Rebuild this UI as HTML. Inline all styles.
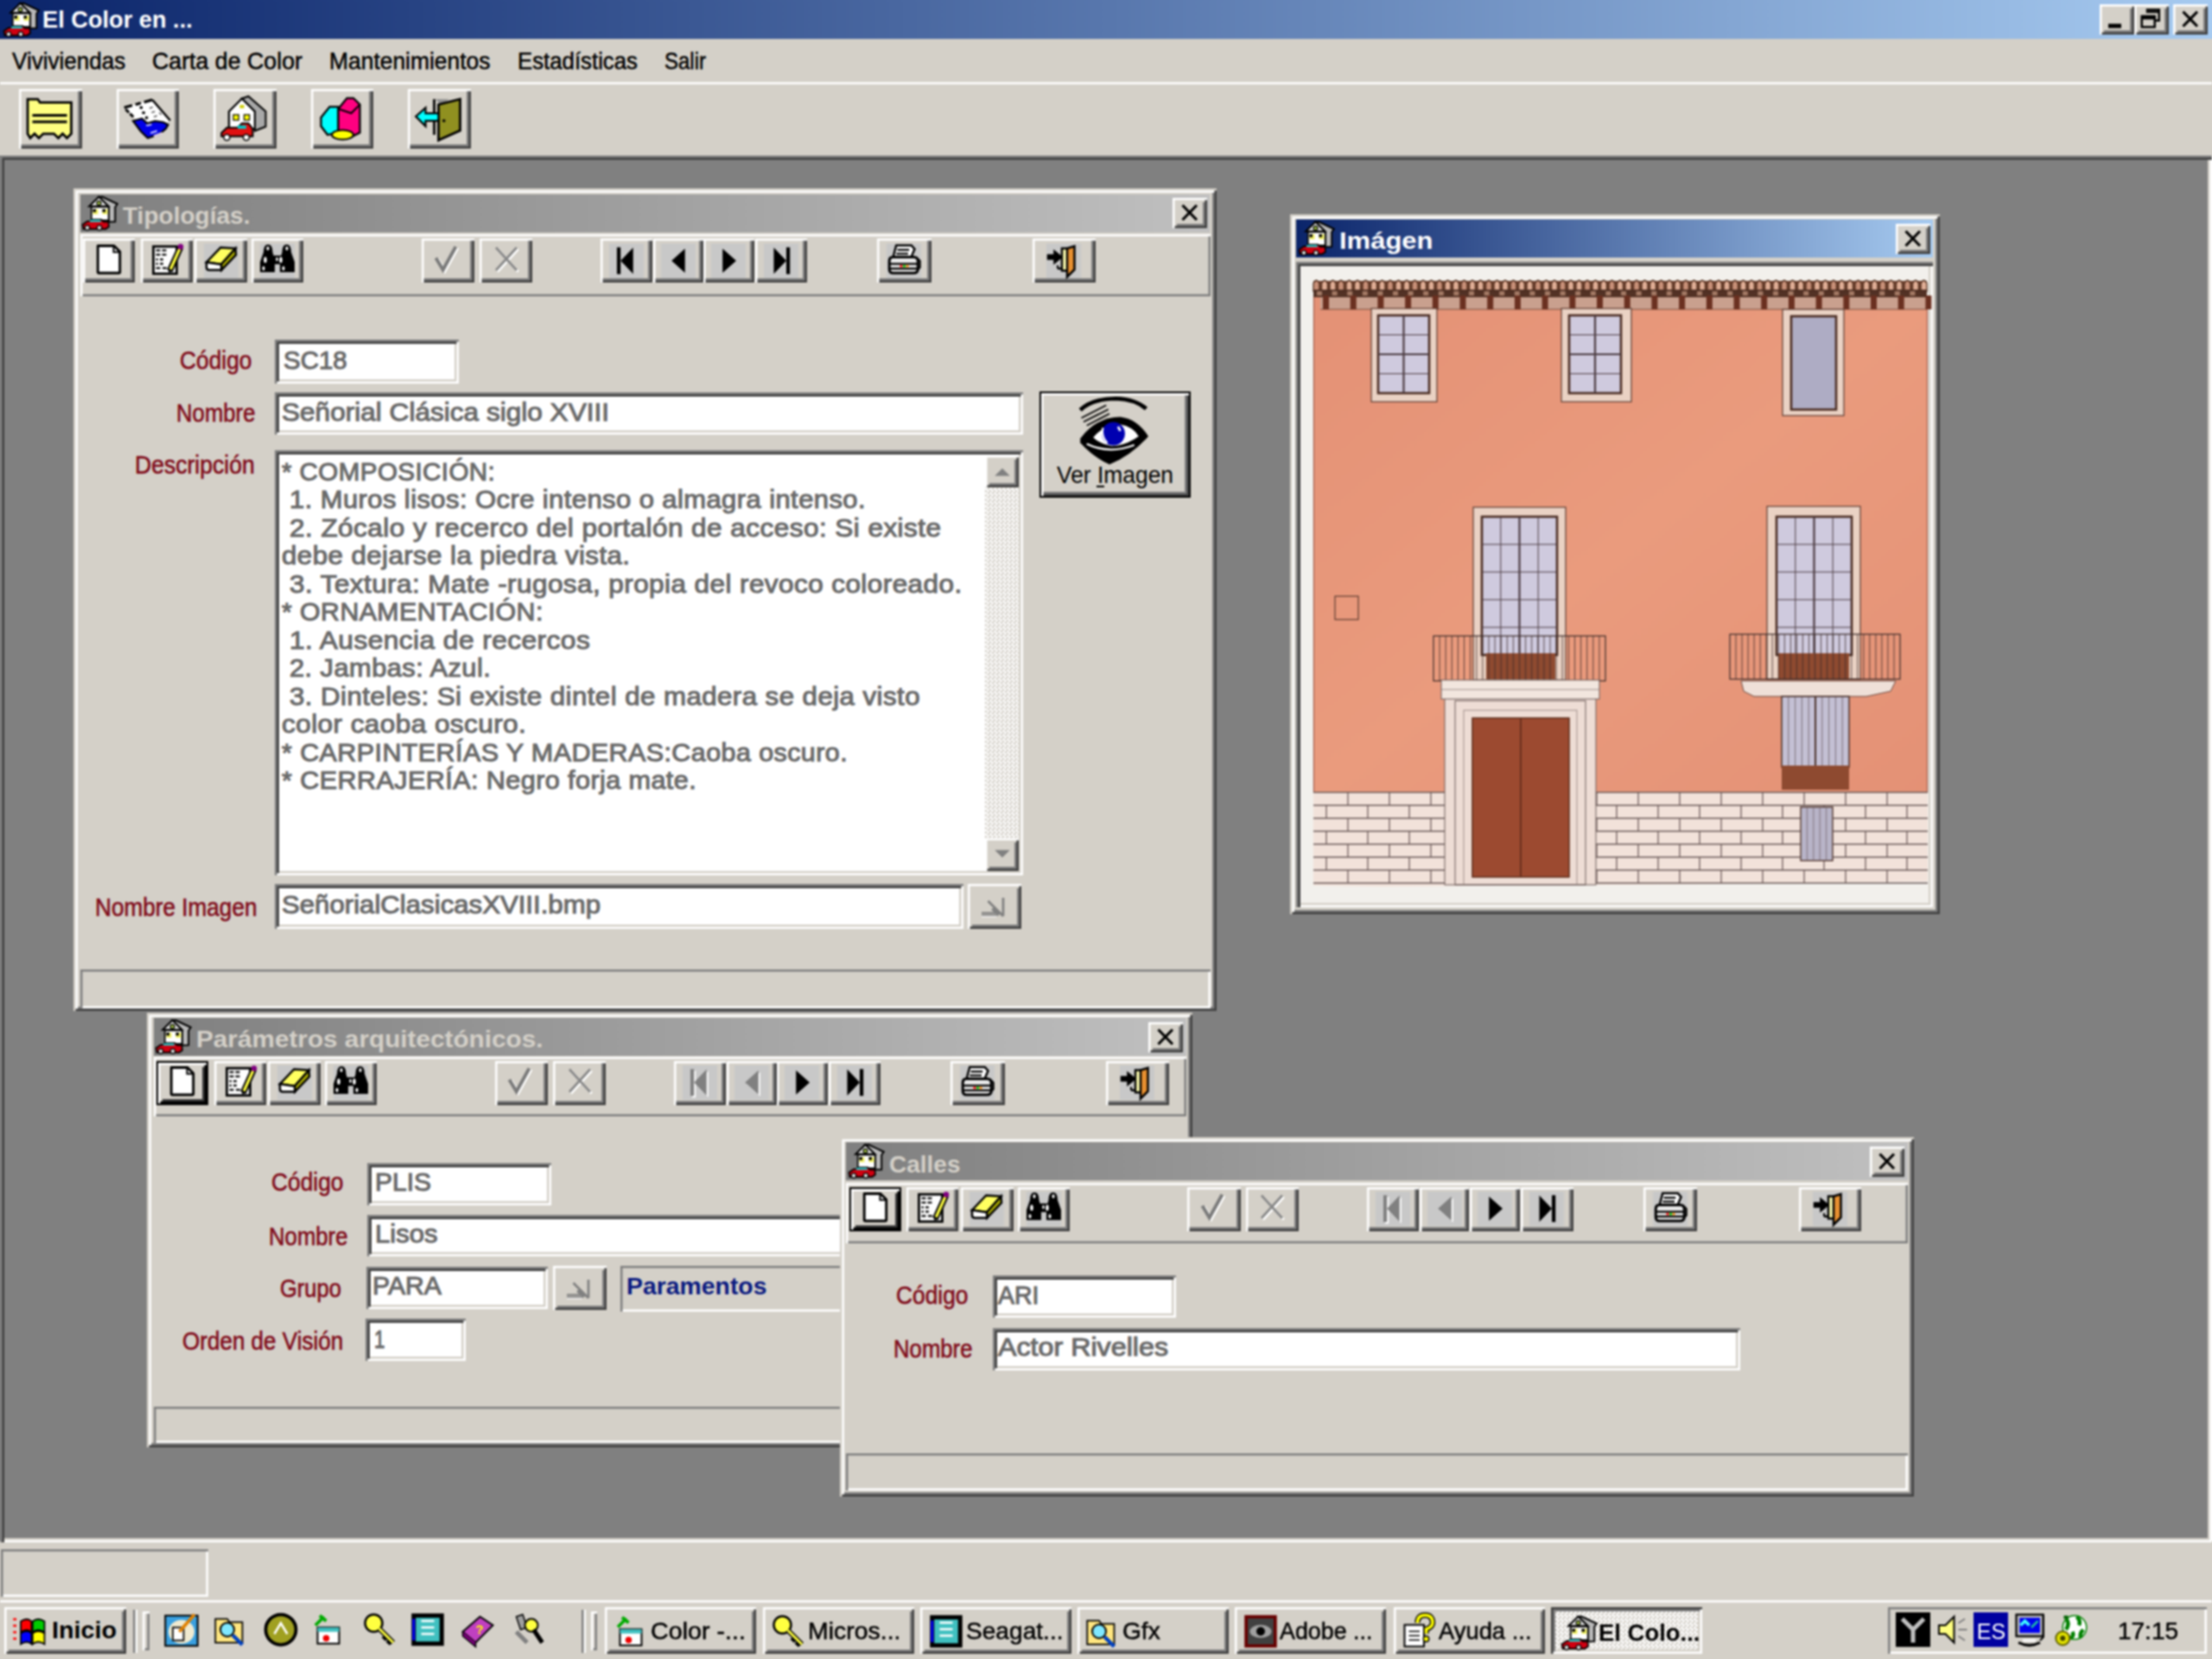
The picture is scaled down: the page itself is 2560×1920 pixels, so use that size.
<!DOCTYPE html><html><head><meta charset="utf-8"><style>

html,body{margin:0;padding:0;background:#d4d0c8;overflow:hidden}
#s{position:absolute;left:0;top:0;width:2560px;height:1920px;filter:blur(0.9px);background:#d4d0c8;font-family:"Liberation Sans",sans-serif}
#s div{position:absolute;box-sizing:border-box}
#s .t{white-space:nowrap;transform-origin:0 0}

</style></head><body><div id="s">
<div style="left:-15px;top:-15px;width:2590px;height:15px;background:linear-gradient(to right,#0a246a,#a6caf0);"></div>
<div style="left:-15px;top:-15px;width:15px;height:60px;background:#0a246a;"></div>
<div style="left:2560px;top:-15px;width:15px;height:60px;background:#a6caf0;"></div>
<div style="left:-15px;top:45px;width:15px;height:135px;background:#d4d0c8;"></div>
<div style="left:2560px;top:45px;width:15px;height:135px;background:#d4d0c8;"></div>
<div style="left:-15px;top:180px;width:15px;height:1602.5px;background:#808080;"></div>
<div style="left:2560px;top:180px;width:15px;height:1602.5px;background:#fff;"></div>
<div style="left:-15px;top:1782.5px;width:15px;height:152.5px;background:#d4d0c8;"></div>
<div style="left:2560px;top:1782.5px;width:15px;height:152.5px;background:#d4d0c8;"></div>
<div style="left:-15px;top:1920px;width:2590px;height:15px;background:#d4d0c8;"></div>
<div style="left:0px;top:0px;width:2560px;height:45px;background:linear-gradient(to right,#0a246a,#a6caf0);"></div>
<svg style="position:absolute;left:5px;top:2.5px;overflow:visible" width="40" height="40" viewBox="0 0 16 16"><path d="M8.9 0.3L15.9 3.6L14.9 5.1V11.8L11.9 11.9V5L7.4 0.4Z" fill="#b8b8b8" stroke="#000" stroke-width="0.8"/><path d="M2.9 4.7L7.4 0.3L11.8 4.7Z" fill="#e8e8e8" stroke="#000" stroke-width="0.8"/><circle cx="7.4" cy="3.2" r="1" fill="#a0c040" stroke="#000" stroke-width="0.5"/><rect x="3.9" y="5" width="8" height="6.2" fill="#fff" stroke="#000" stroke-width="0.7"/><rect x="4.6" y="6" width="2.4" height="2.4" fill="#f0f060"/><rect x="4.6" y="6" width="1.4" height="1.4" fill="#000"/><rect x="9" y="6" width="2.4" height="2.4" fill="#f0f060"/><rect x="9" y="6" width="1.4" height="1.4" fill="#000"/><path d="M-0.2 13.2L2 11.6H3.2L4 10.8H8.5L9.6 11.8H11.8L12 14.2L10.5 15.2H0.2Z" fill="#d00010" stroke="#000" stroke-width="0.7"/><path d="M3.5 11H8L8.6 12H3Z" fill="#30c8c8"/><circle cx="2" cy="14.6" r="1.1" fill="#e0e0e0" stroke="#000" stroke-width="0.5"/><circle cx="7.6" cy="14.6" r="1.1" fill="#e0e0e0" stroke="#000" stroke-width="0.5"/></svg>
<div class="t" style="left:48.8px;top:9.2px;font-size:27.5px;font-weight:bold;line-height:27.5px;color:#fff;transform:scaleX(0.9888);">El Color en ...</div>
<div style="left:2430px;top:5px;width:40px;height:35px;box-shadow:inset 2.5px 2.5px #fff,inset -2.5px -2.5px #404040,inset 5px 5px #d4d0c8,inset -5px -5px #808080;background:#d4d0c8;"></div>
<svg style="position:absolute;left:2430px;top:5px;overflow:visible" width="40" height="35" viewBox="0 0 16 14"><rect x="4" y="9" width="6" height="2" fill="#000"/></svg>
<div style="left:2470px;top:5px;width:40px;height:35px;box-shadow:inset 2.5px 2.5px #fff,inset -2.5px -2.5px #404040,inset 5px 5px #d4d0c8,inset -5px -5px #808080;background:#d4d0c8;"></div>
<svg style="position:absolute;left:2470px;top:5px;overflow:visible" width="40" height="35" viewBox="0 0 16 14"><path d="M5.5 2.5h6v5h-2" stroke="#000" fill="none"/><path d="M5.5 3.5h6" stroke="#000"/><rect x="3.5" y="5.5" width="6" height="5" stroke="#000" fill="none"/><path d="M3.5 6.5h6" stroke="#000"/></svg>
<div style="left:2515px;top:5px;width:40px;height:35px;box-shadow:inset 2.5px 2.5px #fff,inset -2.5px -2.5px #404040,inset 5px 5px #d4d0c8,inset -5px -5px #808080;background:#d4d0c8;"></div>
<svg style="position:absolute;left:2515px;top:5px;overflow:visible" width="40" height="35" viewBox="0 0 16 14"><path d="M4.6 3.4L11.2 10.2M11.2 3.4L4.6 10.2" stroke="#000" stroke-width="1.25"/></svg>
<div class="t" style="left:13.8px;top:57.2px;font-size:27.5px;-webkit-text-stroke:0.5px #000;line-height:27.5px;color:#000;transform:scaleX(0.9469);">Viviviendas</div>
<div class="t" style="left:176.0px;top:57.2px;font-size:27.5px;-webkit-text-stroke:0.5px #000;line-height:27.5px;color:#000;transform:scaleX(0.9729);">Carta de Color</div>
<div class="t" style="left:381.0px;top:57.2px;font-size:27.5px;-webkit-text-stroke:0.5px #000;line-height:27.5px;color:#000;transform:scaleX(0.9607);">Mantenimientos</div>
<div class="t" style="left:598.5px;top:57.2px;font-size:27.5px;-webkit-text-stroke:0.5px #000;line-height:27.5px;color:#000;transform:scaleX(0.9375);">Estadísticas</div>
<div class="t" style="left:768.5px;top:57.2px;font-size:27.5px;-webkit-text-stroke:0.5px #000;line-height:27.5px;color:#000;transform:scaleX(0.8725);">Salir</div>
<div style="left:0px;top:95px;width:2560px;height:85px;box-shadow:inset 0 2.5px #fff;"></div>
<div style="left:22px;top:102.5px;width:72.5px;height:69.5px;box-shadow:inset 2.5px 2.5px #fff,inset -2.5px -2.5px #404040,inset -5px -5px #808080;background:#d4d0c8;"></div>
<div style="left:134.5px;top:102.5px;width:72.5px;height:69.5px;box-shadow:inset 2.5px 2.5px #fff,inset -2.5px -2.5px #404040,inset -5px -5px #808080;background:#d4d0c8;"></div>
<div style="left:247px;top:102.5px;width:72.5px;height:69.5px;box-shadow:inset 2.5px 2.5px #fff,inset -2.5px -2.5px #404040,inset -5px -5px #808080;background:#d4d0c8;"></div>
<div style="left:359.5px;top:102.5px;width:72.5px;height:69.5px;box-shadow:inset 2.5px 2.5px #fff,inset -2.5px -2.5px #404040,inset -5px -5px #808080;background:#d4d0c8;"></div>
<div style="left:472px;top:102.5px;width:72.5px;height:69.5px;box-shadow:inset 2.5px 2.5px #fff,inset -2.5px -2.5px #404040,inset -5px -5px #808080;background:#d4d0c8;"></div>
<svg style="position:absolute;left:30px;top:111.25px;overflow:visible" width="55" height="52.5" viewBox="0 0 22 21"><path d="M0.8 1.5H5.5L6.5 3H21V17.5L19 19.5L17 17.5L15 19.5L13 17.5L8 17.5L6 19.5L4 17.5L2 19.5L0.8 17.5Z" fill="#ffff80" stroke="#000" stroke-width="1.1"/><path d="M3 9H19M3 12H19" stroke="#000" stroke-width="1.2"/></svg>
<svg style="position:absolute;left:142.5px;top:113.75px;overflow:visible" width="55" height="50" viewBox="0 0 22 20"><path d="M0.3 4.2L13.3 0.6L21.6 10.2L13 14.5L5.5 9.5Z" fill="#fff"/><path d="M0.3 4.2L4 3.2M5.5 2.8L8 2.1M9.5 1.7L13.3 0.6" stroke="#000" stroke-width="1.3"/><path d="M1 5L2.5 6.5M3 7L4.5 8.5" stroke="#000" stroke-width="1.2"/><path d="M13.3 0.6L21.6 10.2" stroke="#000" stroke-width="1"/><rect x="7.5" y="3.6" width="1.3" height="1.2" fill="#000"/><rect x="8.6" y="6" width="1.3" height="1.2" fill="#000"/><rect x="10" y="8.3" width="1.3" height="1.2" fill="#000"/><path d="M12 4.5L13.5 4M13 6.5L14.5 6M14 8.5L15.5 8M16.5 6.5L17.5 7.5" stroke="#555" stroke-width="0.6"/><path d="M4.4 10.4L8.5 9.3L11 11.5L14.5 10.5L18.5 11L20.6 12.2L19.5 14L16.5 16.6L11.2 18.3L8 15.2Z" fill="#0000e8" stroke="#000" stroke-width="0.9"/><path d="M10.5 12.5L13 12M12.5 16L15.5 15" stroke="#c8c8ff" stroke-width="0.8"/><path d="M14 17.5L18 16" stroke="#e0d0e0" stroke-width="1"/></svg>
<svg style="position:absolute;left:255px;top:108.75px;overflow:visible" width="55" height="55" viewBox="0 0 22 22"><path d="M4 8L10 2L16 8V16H4Z" fill="#fff" stroke="#000" stroke-width="0.9"/><path d="M10 2L13 1L21 8V15L16 17V8Z" fill="#a8a8a8" stroke="#000" stroke-width="0.8"/><rect x="6" y="9.5" width="2.5" height="2.5" fill="#ff0" stroke="#000" stroke-width="0.5"/><rect x="11" y="9.5" width="2.5" height="2.5" fill="#ff0" stroke="#000" stroke-width="0.5"/><rect x="9" y="5" width="2" height="1.5" fill="#cc0"/><path d="M0.5 18L3 15.5H8L10 13.5H13L15 16V19.5H0.5Z" fill="#e01010" stroke="#000" stroke-width="0.8"/><rect x="8" y="14.5" width="4" height="1.5" fill="#00c8c8"/><circle cx="3" cy="20" r="1.4" fill="#fff" stroke="#000" stroke-width="0.6"/><circle cx="12" cy="20" r="1.4" fill="#fff" stroke="#000" stroke-width="0.6"/></svg>
<svg style="position:absolute;left:368.75px;top:111.25px;overflow:visible" width="52.5" height="52.5" viewBox="0 0 21 21"><path d="M1 10L5 5H9V17L4 18L1 14Z" fill="#00ffff" stroke="#000" stroke-width="0.9"/><path d="M9 6L13 1H16L19 4V17L15 19L9 17Z" fill="#ff0080" stroke="#000" stroke-width="0.9"/><path d="M9 6L15 8L19 4" fill="none" stroke="#000" stroke-width="0.8"/><ellipse cx="11" cy="18" rx="5" ry="2.2" fill="#ffff00" stroke="#000" stroke-width="0.8"/></svg>
<svg style="position:absolute;left:480px;top:111.25px;overflow:visible" width="55" height="53.75" viewBox="0 0 22 21.5"><path d="M9 1.5V18" stroke="#000" stroke-width="1.1"/><path d="M9.5 1.5H16L12 4Z" fill="#909090"/><path d="M11 4L21 1.5V16L11 20.5Z" fill="#909020" stroke="#000" stroke-width="1.1"/><circle cx="13.5" cy="11.5" r="0.7" fill="#000"/><path d="M0.5 9.5L5 5.5V8H11V11.5H5V14Z" fill="#00ffff" stroke="#000" stroke-width="0.9"/></svg>
<div style="left:0px;top:180px;width:2560px;height:1605px;background:#808080;box-shadow:inset 2.5px 2.5px #808080,inset 5px 5px #404040,inset -2.5px -2.5px #fff,inset -5px -5px #d4d0c8;"></div>
<div style="left:0px;top:1785px;width:2560px;height:67.5px;background:#d4d0c8;"></div>
<div style="left:1.25px;top:1792.5px;width:240px;height:55px;box-shadow:inset 2.5px 2.5px #808080,inset -2.5px -2.5px #fff;"></div>
<div style="left:0px;top:1851.5px;width:2560px;height:68.5px;background:#d4d0c8;box-shadow:inset 0 2.5px #fff;"></div>
<div style="left:5px;top:1860px;width:141.25px;height:54px;box-shadow:inset 2.5px 2.5px #fff,inset -2.5px -2.5px #404040,inset 5px 5px #d4d0c8,inset -5px -5px #808080;background:#d4d0c8;"></div>
<svg style="position:absolute;left:13.75px;top:1868.75px;overflow:visible" width="42.5" height="37.5" viewBox="0 0 17 15"><path d="M2 2H0.5M2 5H0.5M2 8H0.5M2 11H0.5" stroke="#f00" stroke-width="1"/><path d="M4 3Q7 1 9 3V8Q7 6 4 8Z" fill="#f00" stroke="#000" stroke-width="0.7"/><path d="M9.5 3Q12 1 15 3V8Q12 6 9.5 8Z" fill="#0c0" stroke="#000" stroke-width="0.7"/><path d="M4 8.5Q7 6.5 9 8.5V13.5Q7 11.5 4 13.5Z" fill="#00f" stroke="#000" stroke-width="0.7"/><path d="M9.5 8.5Q12 6.5 15 8.5V13.5Q12 11.5 9.5 13.5Z" fill="#ff0" stroke="#000" stroke-width="0.7"/></svg>
<div class="t" style="left:60.0px;top:1872.7px;font-size:27.5px;font-weight:bold;line-height:27.5px;color:#000;transform:scaleX(1.0444);">Inicio</div>
<div style="left:153.75px;top:1862.5px;width:5px;height:50px;box-shadow:inset 2.5px 0 #808080,inset -2.5px 0 #fff;"></div>
<div style="left:165px;top:1865px;width:7.5px;height:45px;box-shadow:inset 2.5px 2.5px #fff,inset -2.5px -2.5px #808080;"></div>
<div style="left:672.5px;top:1862.5px;width:5px;height:50px;box-shadow:inset 2.5px 0 #808080,inset -2.5px 0 #fff;"></div>
<div style="left:683.75px;top:1865px;width:7.5px;height:45px;box-shadow:inset 2.5px 2.5px #fff,inset -2.5px -2.5px #808080;"></div>
<svg style="position:absolute;left:190px;top:1866.25px;overflow:visible" width="40" height="40" viewBox="0 0 16 16"><rect x="0.5" y="1.5" width="15" height="14" fill="#3aa0e0" stroke="#000" stroke-width="0.8"/><ellipse cx="8" cy="9" rx="6" ry="5.5" fill="#f0ead0"/><rect x="4" y="7" width="5" height="6" fill="#fff" stroke="#000" stroke-width="0.7"/><path d="M7 9L14 1" stroke="#e08000" stroke-width="1.5"/></svg>
<svg style="position:absolute;left:247.5px;top:1866.25px;overflow:visible" width="40" height="40" viewBox="0 0 16 16"><path d="M0.5 3H6L7 4.5H13V14H0.5Z" fill="#ffe680" stroke="#000" stroke-width="0.7"/><circle cx="6" cy="8" r="3.2" fill="#80e8ff" stroke="#000" stroke-width="0.8"/><path d="M8.5 10.5L13 15" stroke="#0040c0" stroke-width="1.8"/></svg>
<svg style="position:absolute;left:305px;top:1866.25px;overflow:visible" width="40" height="40" viewBox="0 0 16 16"><circle cx="8" cy="8" r="7" fill="#a0a020" stroke="#000" stroke-width="1.5"/><path d="M5 10L8 5L11 10" stroke="#fff" fill="none" stroke-width="1"/></svg>
<svg style="position:absolute;left:360px;top:1866.25px;overflow:visible" width="40" height="40" viewBox="0 0 16 16"><path d="M2 6L6 2M4 1.5L7 4" stroke="#0a0" stroke-width="1.5"/><rect x="3" y="7" width="10" height="7.5" fill="#fff" stroke="#000" stroke-width="0.8"/><rect x="3" y="7" width="10" height="2" fill="#40c0c0"/><circle cx="7" cy="12" r="1.5" fill="#e00"/></svg>
<svg style="position:absolute;left:420px;top:1866.25px;overflow:visible" width="40" height="40" viewBox="0 0 16 16"><circle cx="5" cy="5" r="4" fill="#ffff40" stroke="#000" stroke-width="1"/><path d="M7.5 7.5L14 14M11 11L9.5 12.5M13 13L11.5 14.5" stroke="#000" stroke-width="2.4"/><path d="M7.5 7.5L14 14" stroke="#ffff40" stroke-width="1.2"/></svg>
<svg style="position:absolute;left:475px;top:1866.25px;overflow:visible" width="40" height="40" viewBox="0 0 16 16"><rect x="0.5" y="0.5" width="15" height="15" fill="#000"/><rect x="2.5" y="2.5" width="11" height="11" fill="#40c0c0"/><path d="M5 4H11M5 7H11M5 10H11" stroke="#fff" stroke-width="1"/><path d="M1.5 3V13" stroke="#00f" stroke-width="1.2"/></svg>
<svg style="position:absolute;left:532.5px;top:1866.25px;overflow:visible" width="40" height="40" viewBox="0 0 16 16"><path d="M1 9L9 2L15 6L7 14Z" fill="#c040c0" stroke="#000" stroke-width="0.8"/><path d="M1 9V11L7 16V14" fill="#800080" stroke="#000" stroke-width="0.6"/><text x="7" y="10" font-size="6" fill="#ff0" font-family="Liberation Sans" font-weight="bold">?</text></svg>
<svg style="position:absolute;left:590px;top:1866.25px;overflow:visible" width="40" height="40" viewBox="0 0 16 16"><path d="M3 2L6 1L8 7L5 8Z" fill="#a0a0a0" stroke="#000" stroke-width="0.6"/><circle cx="10" cy="6" r="3" fill="#ffff40" stroke="#000" stroke-width="0.8"/><path d="M11 8L15 14" stroke="#000" stroke-width="2"/><path d="M3 9L8 14" stroke="#808080" stroke-width="2"/></svg>
<div style="left:700px;top:1860px;width:175px;height:54px;box-shadow:inset 2.5px 2.5px #fff,inset -2.5px -2.5px #404040,inset 5px 5px #d4d0c8,inset -5px -5px #808080;background:#d4d0c8;"></div>
<div class="t" style="left:752.5px;top:1873.7px;font-size:27.5px;-webkit-text-stroke:0.5px #000;line-height:27.5px;color:#000;transform:scaleX(1.0433);">Color -...</div>
<div style="left:882.5px;top:1860px;width:175px;height:54px;box-shadow:inset 2.5px 2.5px #fff,inset -2.5px -2.5px #404040,inset 5px 5px #d4d0c8,inset -5px -5px #808080;background:#d4d0c8;"></div>
<div class="t" style="left:935.0px;top:1873.7px;font-size:27.5px;-webkit-text-stroke:0.5px #000;line-height:27.5px;color:#000;transform:scaleX(1.0347);">Micros...</div>
<div style="left:1065px;top:1860px;width:175px;height:54px;box-shadow:inset 2.5px 2.5px #fff,inset -2.5px -2.5px #404040,inset 5px 5px #d4d0c8,inset -5px -5px #808080;background:#d4d0c8;"></div>
<div class="t" style="left:1117.5px;top:1873.7px;font-size:27.5px;-webkit-text-stroke:0.5px #000;line-height:27.5px;color:#000;transform:scaleX(1.0219);">Seagat...</div>
<div style="left:1246.5px;top:1860px;width:175px;height:54px;box-shadow:inset 2.5px 2.5px #fff,inset -2.5px -2.5px #404040,inset 5px 5px #d4d0c8,inset -5px -5px #808080;background:#d4d0c8;"></div>
<div class="t" style="left:1299.0px;top:1873.7px;font-size:27.5px;-webkit-text-stroke:0.5px #000;line-height:27.5px;color:#000;transform:scaleX(1.0226);">Gfx</div>
<div style="left:1428.5px;top:1860px;width:175px;height:54px;box-shadow:inset 2.5px 2.5px #fff,inset -2.5px -2.5px #404040,inset 5px 5px #d4d0c8,inset -5px -5px #808080;background:#d4d0c8;"></div>
<div class="t" style="left:1481.0px;top:1873.7px;font-size:27.5px;-webkit-text-stroke:0.5px #000;line-height:27.5px;color:#000;transform:scaleX(0.9764);">Adobe ...</div>
<div style="left:1612.5px;top:1860px;width:175px;height:54px;box-shadow:inset 2.5px 2.5px #fff,inset -2.5px -2.5px #404040,inset 5px 5px #d4d0c8,inset -5px -5px #808080;background:#d4d0c8;"></div>
<div class="t" style="left:1665.0px;top:1873.7px;font-size:27.5px;-webkit-text-stroke:0.5px #000;line-height:27.5px;color:#000;transform:scaleX(0.9949);">Ayuda ...</div>
<div style="left:1795px;top:1860px;width:175px;height:54px;box-shadow:inset 2.5px 2.5px #404040,inset -2.5px -2.5px #fff,inset 5px 5px #808080,inset -5px -5px #d4d0c8;background:repeating-conic-gradient(#fff 0 25%,#d4d0c8 0 50%) 0 0/5px 5px;"></div>
<svg style="position:absolute;left:1807.5px;top:1870px;overflow:visible" width="40" height="40" viewBox="0 0 16 16"><path d="M8.9 0.3L15.9 3.6L14.9 5.1V11.8L11.9 11.9V5L7.4 0.4Z" fill="#b8b8b8" stroke="#000" stroke-width="0.8"/><path d="M2.9 4.7L7.4 0.3L11.8 4.7Z" fill="#e8e8e8" stroke="#000" stroke-width="0.8"/><circle cx="7.4" cy="3.2" r="1" fill="#a0c040" stroke="#000" stroke-width="0.5"/><rect x="3.9" y="5" width="8" height="6.2" fill="#fff" stroke="#000" stroke-width="0.7"/><rect x="4.6" y="6" width="2.4" height="2.4" fill="#f0f060"/><rect x="4.6" y="6" width="1.4" height="1.4" fill="#000"/><rect x="9" y="6" width="2.4" height="2.4" fill="#f0f060"/><rect x="9" y="6" width="1.4" height="1.4" fill="#000"/><path d="M-0.2 13.2L2 11.6H3.2L4 10.8H8.5L9.6 11.8H11.8L12 14.2L10.5 15.2H0.2Z" fill="#d00010" stroke="#000" stroke-width="0.7"/><path d="M3.5 11H8L8.6 12H3Z" fill="#30c8c8"/><circle cx="2" cy="14.6" r="1.1" fill="#e0e0e0" stroke="#000" stroke-width="0.5"/><circle cx="7.6" cy="14.6" r="1.1" fill="#e0e0e0" stroke="#000" stroke-width="0.5"/></svg>
<div class="t" style="left:1850.0px;top:1875.5px;font-size:27.5px;font-weight:bold;line-height:27.5px;color:#000;transform:scaleX(0.9988);">El Colo...</div>
<svg style="position:absolute;left:710px;top:1867.5px;overflow:visible" width="40" height="40" viewBox="0 0 16 16"><path d="M2 6L6 2M4 1.5L7 4" stroke="#0a0" stroke-width="1.5"/><rect x="3" y="7" width="10" height="7.5" fill="#fff" stroke="#000" stroke-width="0.8"/><rect x="3" y="7" width="10" height="2" fill="#40c0c0"/><circle cx="7" cy="12" r="1.5" fill="#e00"/></svg>
<svg style="position:absolute;left:892.5px;top:1867.5px;overflow:visible" width="40" height="40" viewBox="0 0 16 16"><circle cx="5" cy="5" r="4" fill="#ffff40" stroke="#000" stroke-width="1"/><path d="M7.5 7.5L14 14M11 11L9.5 12.5M13 13L11.5 14.5" stroke="#000" stroke-width="2.4"/><path d="M7.5 7.5L14 14" stroke="#ffff40" stroke-width="1.2"/></svg>
<svg style="position:absolute;left:1075px;top:1867.5px;overflow:visible" width="40" height="40" viewBox="0 0 16 16"><rect x="0.5" y="0.5" width="15" height="15" fill="#000"/><rect x="2.5" y="2.5" width="11" height="11" fill="#40c0c0"/><path d="M5 4H11M5 7H11M5 10H11" stroke="#fff" stroke-width="1"/><path d="M1.5 3V13" stroke="#00f" stroke-width="1.2"/></svg>
<svg style="position:absolute;left:1256.5px;top:1867.5px;overflow:visible" width="40" height="40" viewBox="0 0 16 16"><path d="M0.5 3H6L7 4.5H13V14H0.5Z" fill="#ffe680" stroke="#000" stroke-width="0.7"/><circle cx="6" cy="8" r="3.2" fill="#80e8ff" stroke="#000" stroke-width="0.8"/><path d="M8.5 10.5L13 15" stroke="#0040c0" stroke-width="1.8"/></svg>
<svg style="position:absolute;left:1438.5px;top:1867.5px;overflow:visible" width="40" height="40" viewBox="0 0 16 16"><rect x="0.5" y="0.5" width="15" height="15" fill="#600" /><rect x="2" y="2" width="12" height="12" fill="#404040"/><ellipse cx="8" cy="8" rx="5" ry="3" fill="#a0a0a0"/><circle cx="8" cy="8" r="2" fill="#000"/></svg>
<svg style="position:absolute;left:1622.5px;top:1867.5px;overflow:visible" width="40" height="40" viewBox="0 0 16 16"><rect x="1" y="5" width="9" height="10" fill="#fff" stroke="#000" stroke-width="0.8"/><path d="M3 8h5M3 10h5M3 12h5" stroke="#000" stroke-width="0.6"/><path d="M7 4Q7 0.5 10.5 0.5Q14 0.5 14 4Q14 6 11 7V9" fill="none" stroke="#000" stroke-width="2.6"/><path d="M7 4Q7 0.5 10.5 0.5Q14 0.5 14 4Q14 6 11 7V9" fill="none" stroke="#ff0" stroke-width="1.4"/><circle cx="11" cy="11.5" r="1.3" fill="#ff0" stroke="#000" stroke-width="0.6"/></svg>
<div style="left:2185px;top:1860px;width:369px;height:54px;box-shadow:inset 2.5px 2.5px #808080,inset -2.5px -2.5px #fff;"></div>
<svg style="position:absolute;left:2194px;top:1866.25px;overflow:visible" width="40" height="40" viewBox="0 0 16 16"><rect x="0" y="0" width="16" height="16" fill="#000"/><path d="M3 3L8 8L13 3M8 8V14" stroke="#c0c0c0" stroke-width="2" fill="none"/></svg>
<svg style="position:absolute;left:2239px;top:1866.25px;overflow:visible" width="40" height="40" viewBox="0 0 16 16"><path d="M2 6H5L9 2V14L5 10H2Z" fill="#ffff80" stroke="#000" stroke-width="0.8"/><path d="M11 5L14 3M11 8H15M11 11L14 13" stroke="#808080" stroke-width="0.8"/></svg>
<div style="left:2284px;top:1866.25px;width:40px;height:40px;background:#0000a0;"></div>
<svg style="position:absolute;left:2284px;top:1866.25px;overflow:visible" width="40" height="40" viewBox="0 0 16 16"><text x="1.5" y="12.5" font-size="10" fill="#fff" font-family="Liberation Sans">ES</text></svg>
<svg style="position:absolute;left:2331px;top:1866.25px;overflow:visible" width="40" height="40" viewBox="0 0 16 16"><path d="M1 1H13.5V11H1Z" fill="#c0c0c0" stroke="#000" stroke-width="0.9"/><rect x="2.5" y="2.5" width="9.5" height="7" fill="#0000f0"/><path d="M3 6L5 4L7 6" stroke="#40ffff" stroke-width="1.4" fill="none"/><path d="M8 7L11 4" stroke="#20c0a0" stroke-width="1"/><path d="M13.5 1.5V11.5L12 13" fill="none" stroke="#000" stroke-width="0.8"/><path d="M2 14Q7 16.5 12 14" fill="none" stroke="#000" stroke-width="1.2"/><path d="M4 13H10" stroke="#fff" stroke-width="1"/></svg>
<svg style="position:absolute;left:2376px;top:1866.25px;overflow:visible" width="40" height="40" viewBox="0 0 16 16"><circle cx="10" cy="7" r="5.5" fill="#fff" stroke="#008000" stroke-width="0.6"/><path d="M6 3Q8 5 6 8M11 2Q13 4 12 6M14 8Q12 10 13 12M9 9Q10 11 8 12" stroke="#008000" stroke-width="1.8" fill="none"/><path d="M5 1.5H7V3H5Z" fill="#006000"/><circle cx="4.5" cy="12" r="3.2" fill="#e0e000" stroke="#606000" stroke-width="0.8"/><circle cx="4.5" cy="12" r="1.2" fill="#404000"/></svg>
<div class="t" style="left:2451.0px;top:1874.2px;font-size:27.5px;-webkit-text-stroke:0.5px #000;line-height:27.5px;color:#000;transform:scaleX(1.0170);">17:15</div>
<div style="left:170px;top:1171.5px;width:1210px;height:503.5px;box-shadow:inset 2.5px 2.5px #d4d0c8,inset -2.5px -2.5px #404040,inset 5px 5px #fff,inset -5px -5px #808080;background:#d4d0c8;"></div>
<div style="left:177.5px;top:1178px;width:1195px;height:44px;background:linear-gradient(to right,#808080,#c0c0c0);"></div>
<svg style="position:absolute;left:181.25px;top:1180px;overflow:visible" width="40" height="40" viewBox="0 0 16 16"><path d="M8.9 0.3L15.9 3.6L14.9 5.1V11.8L11.9 11.9V5L7.4 0.4Z" fill="#b8b8b8" stroke="#000" stroke-width="0.8"/><path d="M2.9 4.7L7.4 0.3L11.8 4.7Z" fill="#e8e8e8" stroke="#000" stroke-width="0.8"/><circle cx="7.4" cy="3.2" r="1" fill="#a0c040" stroke="#000" stroke-width="0.5"/><rect x="3.9" y="5" width="8" height="6.2" fill="#fff" stroke="#000" stroke-width="0.7"/><rect x="4.6" y="6" width="2.4" height="2.4" fill="#f0f060"/><rect x="4.6" y="6" width="1.4" height="1.4" fill="#000"/><rect x="9" y="6" width="2.4" height="2.4" fill="#f0f060"/><rect x="9" y="6" width="1.4" height="1.4" fill="#000"/><path d="M-0.2 13.2L2 11.6H3.2L4 10.8H8.5L9.6 11.8H11.8L12 14.2L10.5 15.2H0.2Z" fill="#d00010" stroke="#000" stroke-width="0.7"/><path d="M3.5 11H8L8.6 12H3Z" fill="#30c8c8"/><circle cx="2" cy="14.6" r="1.1" fill="#e0e0e0" stroke="#000" stroke-width="0.5"/><circle cx="7.6" cy="14.6" r="1.1" fill="#e0e0e0" stroke="#000" stroke-width="0.5"/></svg>
<div class="t" style="left:227.0px;top:1189.2px;font-size:27.5px;font-weight:bold;line-height:27.5px;color:#d4d0c8;transform:scaleX(1.0811);">Parámetros arquitectónicos.</div>
<div style="left:1329px;top:1182.5px;width:40px;height:35px;box-shadow:inset 2.5px 2.5px #fff,inset -2.5px -2.5px #404040,inset 5px 5px #d4d0c8,inset -5px -5px #808080;background:#d4d0c8;"></div>
<svg style="position:absolute;left:1329px;top:1182.5px;overflow:visible" width="40" height="35" viewBox="0 0 16 14"><path d="M4.6 3.4L11.2 10.2M11.2 3.4L4.6 10.2" stroke="#000" stroke-width="1.25"/></svg>
<div style="left:177.5px;top:1223px;width:1195px;height:69px;box-shadow:inset 2.5px 2.5px #fff,inset -2.5px -2.5px #808080;"></div>
<div style="left:181px;top:1227.5px;width:60px;height:51px;box-shadow:inset 2.5px 2.5px #fff,inset -2.5px -2.5px #000,inset 5px 5px #d4d0c8,inset -5px -5px #404040,0 0 0 0.03px #000;background:#d4d0c8;border:2.5px solid #000;"></div>
<svg style="position:absolute;left:191px;top:1233px;overflow:visible" width="40" height="40" viewBox="0 0 16 16"><path d="M2.9 1H10.4L13.1 3.7V13.1Q13.1 13.6 12.6 13.6H3.4Q2.9 13.6 2.9 13.1Z" fill="#fff" stroke="#000" stroke-width="1.15" stroke-linejoin="round"/><path d="M10.2 1.2V3.9H12.9" fill="none" stroke="#000" stroke-width="0.8"/></svg>
<div style="left:247.5px;top:1227.5px;width:60px;height:51px;box-shadow:inset 2.5px 2.5px #fff,inset -2.5px -2.5px #404040,inset -5px -5px #808080;background:#d4d0c8;"></div>
<svg style="position:absolute;left:257.5px;top:1233px;overflow:visible" width="40" height="40" viewBox="0 0 16 16"><rect x="1.8" y="1.3" width="10.8" height="12.6" fill="#fff" stroke="#000" stroke-width="1.1"/><path d="M3 3.1h2M5.8 3.1h2M3 5.1h2M5.8 5.1h2M3 7.3h1M4.8 7.3h1.6M3 9.3h1M4.8 9.3h1.6M3 11.3h2M6 11.3h2" stroke="#222" stroke-width="1"/><path d="M8.6 11.8L13.2 1.6L15.1 2.5L10.5 12.7Z" fill="#ffff40" stroke="#000" stroke-width="0.8"/><path d="M8.6 11.8L9 13.6L10.5 12.7Z" fill="#000"/><circle cx="14.4" cy="1.4" r="1.3" fill="#800080"/></svg>
<div style="left:310px;top:1227.5px;width:61px;height:51px;box-shadow:inset 2.5px 2.5px #fff,inset -2.5px -2.5px #404040,inset -5px -5px #808080;background:#d4d0c8;"></div>
<div style="left:320.5px;top:1233px;width:40px;height:40px;background:#c8c8c8;"></div>
<svg style="position:absolute;left:320.5px;top:1233px;overflow:visible" width="40" height="40" viewBox="0 0 16 16"><path d="M1.2 8.6L7.7 1.8L14.6 2.2L8 9.6Z" fill="#ffff60" stroke="#000" stroke-width="1"/><path d="M8 9.6L14.6 2.2L14.8 5.2L8.1 12.2Z" fill="#b0b000" stroke="#000" stroke-width="1"/><path d="M1.2 8.6V11Q1.2 12.2 2.5 12.2H8.1L8 9.6Z" fill="#fff" stroke="#000" stroke-width="1"/></svg>
<div style="left:376px;top:1227.5px;width:60px;height:51px;box-shadow:inset 2.5px 2.5px #fff,inset -2.5px -2.5px #404040,inset -5px -5px #808080;background:#d4d0c8;"></div>
<div style="left:386px;top:1233px;width:40px;height:40px;background:#c8c8c8;"></div>
<svg style="position:absolute;left:386px;top:1233px;overflow:visible" width="40" height="40" viewBox="0 0 16 16"><path d="M1.6 4Q1.6 0.4 3.7 0.4Q5.8 0.4 5.8 4L6.8 7.5V13.2H0V8.5Z" fill="#000"/><path d="M14.4 4Q14.4 0.4 12.3 0.4Q10.2 0.4 10.2 4L9.2 7.5V13.2H16V8.5Z" fill="#000"/><rect x="6" y="5.5" width="4" height="4" fill="#000"/><ellipse cx="3.6" cy="2.2" rx="0.6" ry="0.9" fill="#fff"/><ellipse cx="12.4" cy="2.2" rx="0.6" ry="0.9" fill="#fff"/><ellipse cx="2.4" cy="7.5" rx="0.7" ry="1.4" fill="#fff"/><ellipse cx="9.6" cy="7.5" rx="0.7" ry="1.4" fill="#fff"/><ellipse cx="1.6" cy="11.4" rx="0.6" ry="1" fill="#fff"/><ellipse cx="10.8" cy="11.4" rx="0.6" ry="1" fill="#fff"/><ellipse cx="7.8" cy="7.2" rx="0.5" ry="0.9" fill="#fff"/></svg>
<div style="left:572.5px;top:1227.5px;width:61.5px;height:51px;box-shadow:inset 2.5px 2.5px #fff,inset -2.5px -2.5px #404040,inset -5px -5px #808080;background:#d4d0c8;"></div>
<svg style="position:absolute;left:583.25px;top:1233px;overflow:visible" width="40" height="40" viewBox="0 0 16 16"><path d="M2.6 6.6L5.9 12.1L11.8 1.4" fill="none" stroke="#fff" stroke-width="1.5" transform="translate(0.8,0.5)"/><path d="M2.6 6.6L5.9 12.1L11.8 1.4" fill="none" stroke="#7a7a7a" stroke-width="1.6"/></svg>
<div style="left:640px;top:1227.5px;width:61px;height:51px;box-shadow:inset 2.5px 2.5px #fff,inset -2.5px -2.5px #404040,inset -5px -5px #808080;background:#d4d0c8;"></div>
<svg style="position:absolute;left:650.5px;top:1233px;overflow:visible" width="40" height="40" viewBox="0 0 16 16"><path d="M3.2 1.8L12.8 12.3M12.8 1.8L3.2 12.3" fill="none" stroke="#fff" stroke-width="1.1" transform="translate(0.7,0.7)"/><path d="M3.2 1.8L12.8 12.3M12.8 1.8L3.2 12.3" fill="none" stroke="#888" stroke-width="1.1"/></svg>
<div style="left:780px;top:1227.5px;width:60px;height:51px;box-shadow:inset 2.5px 2.5px #fff,inset -2.5px -2.5px #404040,inset -5px -5px #808080;background:#d4d0c8;"></div>
<div style="left:790px;top:1233px;width:40px;height:40px;background:#c8c8c8;"></div>
<svg style="position:absolute;left:790px;top:1233px;overflow:visible" width="40" height="40" viewBox="0 0 16 16"><g transform="translate(0.8,0.8)"><rect x="3.6" y="1.7" width="1.7" height="12.4" fill="#fff"/><path d="M5.3 7.9L11.1 1.8V14Z" fill="#fff"/></g><rect x="3.6" y="1.7" width="1.7" height="12.4" fill="#808080"/><path d="M5.3 7.9L11.1 1.8V14Z" fill="#808080"/></svg>
<div style="left:841.25px;top:1227.5px;width:57.5px;height:51px;box-shadow:inset 2.5px 2.5px #fff,inset -2.5px -2.5px #404040,inset -5px -5px #808080;background:#d4d0c8;"></div>
<div style="left:850px;top:1233px;width:40px;height:40px;background:#c8c8c8;"></div>
<svg style="position:absolute;left:850px;top:1233px;overflow:visible" width="40" height="40" viewBox="0 0 16 16"><g transform="translate(0.8,0.8)"><path d="M4.9 7.9L11.1 2.3V13.5Z" fill="#fff"/></g><path d="M4.9 7.9L11.1 2.3V13.5Z" fill="#808080"/></svg>
<div style="left:899px;top:1227.5px;width:58.5px;height:51px;box-shadow:inset 2.5px 2.5px #fff,inset -2.5px -2.5px #404040,inset -5px -5px #808080;background:#d4d0c8;"></div>
<div style="left:908.25px;top:1233px;width:40px;height:40px;background:#c8c8c8;"></div>
<svg style="position:absolute;left:908.25px;top:1233px;overflow:visible" width="40" height="40" viewBox="0 0 16 16"><path d="M11.6 7.9L5.3 2.3V13.5Z" fill="#000"/></svg>
<div style="left:958.5px;top:1227.5px;width:60.5px;height:51px;box-shadow:inset 2.5px 2.5px #fff,inset -2.5px -2.5px #404040,inset -5px -5px #808080;background:#d4d0c8;"></div>
<div style="left:968.75px;top:1233px;width:40px;height:40px;background:#c8c8c8;"></div>
<svg style="position:absolute;left:968.75px;top:1233px;overflow:visible" width="40" height="40" viewBox="0 0 16 16"><rect x="10.4" y="1.7" width="1.7" height="12.4" fill="#000"/><path d="M10.4 7.9L4.6 1.8V14Z" fill="#000"/></svg>
<div style="left:1100px;top:1227.5px;width:62.5px;height:51px;box-shadow:inset 2.5px 2.5px #fff,inset -2.5px -2.5px #404040,inset -5px -5px #808080;background:#d4d0c8;"></div>
<div style="left:1111.25px;top:1233px;width:40px;height:40px;background:#c8c8c8;"></div>
<svg style="position:absolute;left:1111.25px;top:1233px;overflow:visible" width="40" height="40" viewBox="0 0 16 16"><path d="M4.5 0.8H11.5L13 2.5L11.3 6.5H3Z" fill="#fff" stroke="#000" stroke-width="1"/><path d="M5 2.8h5.5M4.5 4.6h5.5" stroke="#000" stroke-width="0.9"/><path d="M1.3 8Q1.3 6.2 3 6.2H12.5Q14.5 6.2 14.5 8V11.8Q14.5 13.6 12.5 13.6H3Q1.3 13.6 1.3 11.8Z" fill="#e8e8e8" stroke="#000" stroke-width="1.2"/><path d="M1.5 9.3H14.3M1.5 11.5H14.3" stroke="#000" stroke-width="0.9"/><path d="M14.5 7L15.5 8V11L14.5 12" fill="none" stroke="#000" stroke-width="0.8"/><rect x="6.2" y="9.9" width="1.2" height="1" fill="#f00"/><rect x="7.6" y="9.9" width="1.2" height="1" fill="#0c0"/><rect x="9" y="9.9" width="1.2" height="1" fill="#f80"/></svg>
<div style="left:1280px;top:1227.5px;width:72.5px;height:51px;box-shadow:inset 2.5px 2.5px #fff,inset -2.5px -2.5px #404040,inset -5px -5px #808080;background:#d4d0c8;"></div>
<div style="left:1296.25px;top:1233px;width:40px;height:40px;background:#c8c8c8;"></div>
<svg style="position:absolute;left:1296.25px;top:1233px;overflow:visible" width="40" height="40" viewBox="0 0 16 16"><path d="M7.2 2.2H12.2V12.5H7.2Z" fill="#ffffb0" stroke="#000" stroke-width="1"/><path d="M9.6 2.2L13 1.2V12L9.6 15.4Z" fill="#e89030" stroke="#000" stroke-width="1"/><path d="M0.6 5.2H3.6V3.2L7.2 6.2L3.6 9.2V7.2H0.6Z" fill="#000" stroke="#000" stroke-width="0.6"/><path d="M5.2 11.5H7.2" stroke="#000" fill="none" stroke-width="1"/><path d="M5.2 10V11.5" stroke="#000" stroke-width="0.8"/></svg>
<div class="t" style="left:314.0px;top:1353.4px;font-size:30px;-webkit-text-stroke:0.62px #801020;line-height:30px;color:#800818;transform:scaleX(0.8782);">Código</div>
<div style="left:425px;top:1346.25px;width:212.5px;height:49px;box-shadow:inset 2.5px 2.5px #808080,inset -2.5px -2.5px #fff,inset 5px 5px #404040,inset -5px -5px #d4d0c8;background:#fff;"></div>
<div class="t" style="left:433.8px;top:1354.4px;font-size:28.75px;-webkit-text-stroke:1.05px #6a6a6a;line-height:28.75px;color:#6a6a6a;transform:scaleX(1.0426);">PLIS</div>
<div class="t" style="left:311.0px;top:1415.6px;font-size:30px;-webkit-text-stroke:0.62px #801020;line-height:30px;color:#800818;transform:scaleX(0.8575);">Nombre</div>
<div style="left:425px;top:1406.25px;width:1000px;height:48px;box-shadow:inset 2.5px 2.5px #808080,inset -2.5px -2.5px #fff,inset 5px 5px #404040,inset -5px -5px #d4d0c8;background:#fff;"></div>
<div class="t" style="left:433.8px;top:1414.4px;font-size:28.75px;-webkit-text-stroke:1.05px #6a6a6a;line-height:28.75px;color:#6a6a6a;transform:scaleX(1.0801);">Lisos</div>
<div class="t" style="left:324.0px;top:1475.9px;font-size:30px;-webkit-text-stroke:0.62px #801020;line-height:30px;color:#800818;transform:scaleX(0.8514);">Grupo</div>
<div style="left:424px;top:1466px;width:210px;height:49px;box-shadow:inset 2.5px 2.5px #808080,inset -2.5px -2.5px #fff,inset 5px 5px #404040,inset -5px -5px #d4d0c8;background:#fff;"></div>
<div class="t" style="left:431.2px;top:1474.4px;font-size:28.75px;-webkit-text-stroke:1.05px #6a6a6a;line-height:28.75px;color:#6a6a6a;transform:scaleX(1.0503);">PARA</div>
<div style="left:640px;top:1465px;width:61.5px;height:51px;box-shadow:inset 2.5px 2.5px #fff,inset -2.5px -2.5px #404040,inset 5px 5px #d4d0c8,inset -5px -5px #808080;background:#d4d0c8;"></div>
<svg style="position:absolute;left:650.75px;top:1470.5px;overflow:visible" width="40" height="40" viewBox="0 0 16 16"><path d="M2 11H9M2 12.2H9" stroke="#808080" stroke-width="0.9"/><path d="M2 12.7H9" stroke="#fff" stroke-width="0.5"/><path d="M5 5.5L12 12.5M12 4V12.5" stroke="#808080" stroke-width="1.1" fill="none"/><path d="M7 9L10 12" stroke="#808080" stroke-width="1.5"/></svg>
<div style="left:717.5px;top:1465px;width:500px;height:52.5px;box-shadow:inset 2.5px 2.5px #808080,inset -2.5px -2.5px #fff;"></div>
<div class="t" style="left:725.0px;top:1475.2px;font-size:27.5px;font-weight:bold;line-height:27.5px;color:#0a1a80;transform:scaleX(1.0322);">Paramentos</div>
<div class="t" style="left:211.2px;top:1537.1px;font-size:30px;-webkit-text-stroke:0.62px #801020;line-height:30px;color:#800818;transform:scaleX(0.8679);">Orden de Visión</div>
<div style="left:422.5px;top:1526px;width:116.25px;height:49px;box-shadow:inset 2.5px 2.5px #808080,inset -2.5px -2.5px #fff,inset 5px 5px #404040,inset -5px -5px #d4d0c8;background:#fff;"></div>
<div class="t" style="left:432.5px;top:1535.7px;font-size:28.75px;-webkit-text-stroke:1.05px #6a6a6a;line-height:28.75px;color:#6a6a6a;transform:scaleX(0.7812);">1</div>
<div style="left:177.5px;top:1627.5px;width:1195px;height:42.5px;box-shadow:inset 2.5px 2.5px #808080,inset -2.5px -2.5px #fff;"></div>
<div style="left:85px;top:218px;width:1322.5px;height:952px;box-shadow:inset 2.5px 2.5px #d4d0c8,inset -2.5px -2.5px #404040,inset 5px 5px #fff,inset -5px -5px #808080;background:#d4d0c8;"></div>
<div style="left:92.5px;top:224.5px;width:1307.5px;height:44px;background:linear-gradient(to right,#808080,#c0c0c0);"></div>
<svg style="position:absolute;left:96.25px;top:226.5px;overflow:visible" width="40" height="40" viewBox="0 0 16 16"><path d="M8.9 0.3L15.9 3.6L14.9 5.1V11.8L11.9 11.9V5L7.4 0.4Z" fill="#b8b8b8" stroke="#000" stroke-width="0.8"/><path d="M2.9 4.7L7.4 0.3L11.8 4.7Z" fill="#e8e8e8" stroke="#000" stroke-width="0.8"/><circle cx="7.4" cy="3.2" r="1" fill="#a0c040" stroke="#000" stroke-width="0.5"/><rect x="3.9" y="5" width="8" height="6.2" fill="#fff" stroke="#000" stroke-width="0.7"/><rect x="4.6" y="6" width="2.4" height="2.4" fill="#f0f060"/><rect x="4.6" y="6" width="1.4" height="1.4" fill="#000"/><rect x="9" y="6" width="2.4" height="2.4" fill="#f0f060"/><rect x="9" y="6" width="1.4" height="1.4" fill="#000"/><path d="M-0.2 13.2L2 11.6H3.2L4 10.8H8.5L9.6 11.8H11.8L12 14.2L10.5 15.2H0.2Z" fill="#d00010" stroke="#000" stroke-width="0.7"/><path d="M3.5 11H8L8.6 12H3Z" fill="#30c8c8"/><circle cx="2" cy="14.6" r="1.1" fill="#e0e0e0" stroke="#000" stroke-width="0.5"/><circle cx="7.6" cy="14.6" r="1.1" fill="#e0e0e0" stroke="#000" stroke-width="0.5"/></svg>
<div class="t" style="left:142.0px;top:235.7px;font-size:27.5px;font-weight:bold;line-height:27.5px;color:#d4d0c8;transform:scaleX(1.0197);">Tipologías.</div>
<div style="left:1356.5px;top:229px;width:40px;height:35px;box-shadow:inset 2.5px 2.5px #fff,inset -2.5px -2.5px #404040,inset 5px 5px #d4d0c8,inset -5px -5px #808080;background:#d4d0c8;"></div>
<svg style="position:absolute;left:1356.5px;top:229px;overflow:visible" width="40" height="35" viewBox="0 0 16 14"><path d="M4.6 3.4L11.2 10.2M11.2 3.4L4.6 10.2" stroke="#000" stroke-width="1.25"/></svg>
<div style="left:92.5px;top:271px;width:1308.5px;height:71.5px;box-shadow:inset 2.5px 2.5px #fff,inset -2.5px -2.5px #808080;"></div>
<div style="left:96px;top:276px;width:60px;height:51px;box-shadow:inset 2.5px 2.5px #fff,inset -2.5px -2.5px #404040,inset -5px -5px #808080;background:#d4d0c8;"></div>
<svg style="position:absolute;left:106px;top:281.5px;overflow:visible" width="40" height="40" viewBox="0 0 16 16"><path d="M2.9 1H10.4L13.1 3.7V13.1Q13.1 13.6 12.6 13.6H3.4Q2.9 13.6 2.9 13.1Z" fill="#fff" stroke="#000" stroke-width="1.15" stroke-linejoin="round"/><path d="M10.2 1.2V3.9H12.9" fill="none" stroke="#000" stroke-width="0.8"/></svg>
<div style="left:162.5px;top:276px;width:60px;height:51px;box-shadow:inset 2.5px 2.5px #fff,inset -2.5px -2.5px #404040,inset -5px -5px #808080;background:#d4d0c8;"></div>
<svg style="position:absolute;left:172.5px;top:281.5px;overflow:visible" width="40" height="40" viewBox="0 0 16 16"><rect x="1.8" y="1.3" width="10.8" height="12.6" fill="#fff" stroke="#000" stroke-width="1.1"/><path d="M3 3.1h2M5.8 3.1h2M3 5.1h2M5.8 5.1h2M3 7.3h1M4.8 7.3h1.6M3 9.3h1M4.8 9.3h1.6M3 11.3h2M6 11.3h2" stroke="#222" stroke-width="1"/><path d="M8.6 11.8L13.2 1.6L15.1 2.5L10.5 12.7Z" fill="#ffff40" stroke="#000" stroke-width="0.8"/><path d="M8.6 11.8L9 13.6L10.5 12.7Z" fill="#000"/><circle cx="14.4" cy="1.4" r="1.3" fill="#800080"/></svg>
<div style="left:225px;top:276px;width:61px;height:51px;box-shadow:inset 2.5px 2.5px #fff,inset -2.5px -2.5px #404040,inset -5px -5px #808080;background:#d4d0c8;"></div>
<div style="left:235.5px;top:281.5px;width:40px;height:40px;background:#c8c8c8;"></div>
<svg style="position:absolute;left:235.5px;top:281.5px;overflow:visible" width="40" height="40" viewBox="0 0 16 16"><path d="M1.2 8.6L7.7 1.8L14.6 2.2L8 9.6Z" fill="#ffff60" stroke="#000" stroke-width="1"/><path d="M8 9.6L14.6 2.2L14.8 5.2L8.1 12.2Z" fill="#b0b000" stroke="#000" stroke-width="1"/><path d="M1.2 8.6V11Q1.2 12.2 2.5 12.2H8.1L8 9.6Z" fill="#fff" stroke="#000" stroke-width="1"/></svg>
<div style="left:291px;top:276px;width:60px;height:51px;box-shadow:inset 2.5px 2.5px #fff,inset -2.5px -2.5px #404040,inset -5px -5px #808080;background:#d4d0c8;"></div>
<div style="left:301px;top:281.5px;width:40px;height:40px;background:#c8c8c8;"></div>
<svg style="position:absolute;left:301px;top:281.5px;overflow:visible" width="40" height="40" viewBox="0 0 16 16"><path d="M1.6 4Q1.6 0.4 3.7 0.4Q5.8 0.4 5.8 4L6.8 7.5V13.2H0V8.5Z" fill="#000"/><path d="M14.4 4Q14.4 0.4 12.3 0.4Q10.2 0.4 10.2 4L9.2 7.5V13.2H16V8.5Z" fill="#000"/><rect x="6" y="5.5" width="4" height="4" fill="#000"/><ellipse cx="3.6" cy="2.2" rx="0.6" ry="0.9" fill="#fff"/><ellipse cx="12.4" cy="2.2" rx="0.6" ry="0.9" fill="#fff"/><ellipse cx="2.4" cy="7.5" rx="0.7" ry="1.4" fill="#fff"/><ellipse cx="9.6" cy="7.5" rx="0.7" ry="1.4" fill="#fff"/><ellipse cx="1.6" cy="11.4" rx="0.6" ry="1" fill="#fff"/><ellipse cx="10.8" cy="11.4" rx="0.6" ry="1" fill="#fff"/><ellipse cx="7.8" cy="7.2" rx="0.5" ry="0.9" fill="#fff"/></svg>
<div style="left:487.5px;top:276px;width:61.5px;height:51px;box-shadow:inset 2.5px 2.5px #fff,inset -2.5px -2.5px #404040,inset -5px -5px #808080;background:#d4d0c8;"></div>
<svg style="position:absolute;left:498.25px;top:281.5px;overflow:visible" width="40" height="40" viewBox="0 0 16 16"><path d="M2.6 6.6L5.9 12.1L11.8 1.4" fill="none" stroke="#fff" stroke-width="1.5" transform="translate(0.8,0.5)"/><path d="M2.6 6.6L5.9 12.1L11.8 1.4" fill="none" stroke="#7a7a7a" stroke-width="1.6"/></svg>
<div style="left:555px;top:276px;width:61px;height:51px;box-shadow:inset 2.5px 2.5px #fff,inset -2.5px -2.5px #404040,inset -5px -5px #808080;background:#d4d0c8;"></div>
<svg style="position:absolute;left:565.5px;top:281.5px;overflow:visible" width="40" height="40" viewBox="0 0 16 16"><path d="M3.2 1.8L12.8 12.3M12.8 1.8L3.2 12.3" fill="none" stroke="#fff" stroke-width="1.1" transform="translate(0.7,0.7)"/><path d="M3.2 1.8L12.8 12.3M12.8 1.8L3.2 12.3" fill="none" stroke="#888" stroke-width="1.1"/></svg>
<div style="left:695px;top:276px;width:60px;height:51px;box-shadow:inset 2.5px 2.5px #fff,inset -2.5px -2.5px #404040,inset -5px -5px #808080;background:#d4d0c8;"></div>
<div style="left:705px;top:281.5px;width:40px;height:40px;background:#c8c8c8;"></div>
<svg style="position:absolute;left:705px;top:281.5px;overflow:visible" width="40" height="40" viewBox="0 0 16 16"><rect x="3.6" y="1.7" width="1.7" height="12.4" fill="#000"/><path d="M5.3 7.9L11.1 1.8V14Z" fill="#000"/></svg>
<div style="left:756.25px;top:276px;width:57.5px;height:51px;box-shadow:inset 2.5px 2.5px #fff,inset -2.5px -2.5px #404040,inset -5px -5px #808080;background:#d4d0c8;"></div>
<div style="left:765px;top:281.5px;width:40px;height:40px;background:#c8c8c8;"></div>
<svg style="position:absolute;left:765px;top:281.5px;overflow:visible" width="40" height="40" viewBox="0 0 16 16"><path d="M4.9 7.9L11.1 2.3V13.5Z" fill="#000"/></svg>
<div style="left:814px;top:276px;width:58.5px;height:51px;box-shadow:inset 2.5px 2.5px #fff,inset -2.5px -2.5px #404040,inset -5px -5px #808080;background:#d4d0c8;"></div>
<div style="left:823.25px;top:281.5px;width:40px;height:40px;background:#c8c8c8;"></div>
<svg style="position:absolute;left:823.25px;top:281.5px;overflow:visible" width="40" height="40" viewBox="0 0 16 16"><path d="M11.6 7.9L5.3 2.3V13.5Z" fill="#000"/></svg>
<div style="left:873.5px;top:276px;width:60.5px;height:51px;box-shadow:inset 2.5px 2.5px #fff,inset -2.5px -2.5px #404040,inset -5px -5px #808080;background:#d4d0c8;"></div>
<div style="left:883.75px;top:281.5px;width:40px;height:40px;background:#c8c8c8;"></div>
<svg style="position:absolute;left:883.75px;top:281.5px;overflow:visible" width="40" height="40" viewBox="0 0 16 16"><rect x="10.4" y="1.7" width="1.7" height="12.4" fill="#000"/><path d="M10.4 7.9L4.6 1.8V14Z" fill="#000"/></svg>
<div style="left:1015px;top:276px;width:62.5px;height:51px;box-shadow:inset 2.5px 2.5px #fff,inset -2.5px -2.5px #404040,inset -5px -5px #808080;background:#d4d0c8;"></div>
<div style="left:1026.25px;top:281.5px;width:40px;height:40px;background:#c8c8c8;"></div>
<svg style="position:absolute;left:1026.25px;top:281.5px;overflow:visible" width="40" height="40" viewBox="0 0 16 16"><path d="M4.5 0.8H11.5L13 2.5L11.3 6.5H3Z" fill="#fff" stroke="#000" stroke-width="1"/><path d="M5 2.8h5.5M4.5 4.6h5.5" stroke="#000" stroke-width="0.9"/><path d="M1.3 8Q1.3 6.2 3 6.2H12.5Q14.5 6.2 14.5 8V11.8Q14.5 13.6 12.5 13.6H3Q1.3 13.6 1.3 11.8Z" fill="#e8e8e8" stroke="#000" stroke-width="1.2"/><path d="M1.5 9.3H14.3M1.5 11.5H14.3" stroke="#000" stroke-width="0.9"/><path d="M14.5 7L15.5 8V11L14.5 12" fill="none" stroke="#000" stroke-width="0.8"/><rect x="6.2" y="9.9" width="1.2" height="1" fill="#f00"/><rect x="7.6" y="9.9" width="1.2" height="1" fill="#0c0"/><rect x="9" y="9.9" width="1.2" height="1" fill="#f80"/></svg>
<div style="left:1195px;top:276px;width:72.5px;height:51px;box-shadow:inset 2.5px 2.5px #fff,inset -2.5px -2.5px #404040,inset -5px -5px #808080;background:#d4d0c8;"></div>
<div style="left:1211.25px;top:281.5px;width:40px;height:40px;background:#c8c8c8;"></div>
<svg style="position:absolute;left:1211.25px;top:281.5px;overflow:visible" width="40" height="40" viewBox="0 0 16 16"><path d="M7.2 2.2H12.2V12.5H7.2Z" fill="#ffffb0" stroke="#000" stroke-width="1"/><path d="M9.6 2.2L13 1.2V12L9.6 15.4Z" fill="#e89030" stroke="#000" stroke-width="1"/><path d="M0.6 5.2H3.6V3.2L7.2 6.2L3.6 9.2V7.2H0.6Z" fill="#000" stroke="#000" stroke-width="0.6"/><path d="M5.2 11.5H7.2" stroke="#000" fill="none" stroke-width="1"/><path d="M5.2 10V11.5" stroke="#000" stroke-width="0.8"/></svg>
<div class="t" style="left:207.5px;top:402.1px;font-size:30px;-webkit-text-stroke:0.62px #801020;line-height:30px;color:#800818;transform:scaleX(0.8782);">Código</div>
<div style="left:317.5px;top:392.5px;width:213.5px;height:51.5px;box-shadow:inset 2.5px 2.5px #808080,inset -2.5px -2.5px #fff,inset 5px 5px #404040,inset -5px -5px #d4d0c8;background:#fff;"></div>
<div class="t" style="left:327.5px;top:403.2px;font-size:28.75px;-webkit-text-stroke:1.05px #6a6a6a;line-height:28.75px;color:#6a6a6a;transform:scaleX(1.0254);">SC18</div>
<div class="t" style="left:204.0px;top:463.4px;font-size:30px;-webkit-text-stroke:0.62px #801020;line-height:30px;color:#800818;transform:scaleX(0.8575);">Nombre</div>
<div style="left:317.5px;top:454px;width:866.25px;height:49px;box-shadow:inset 2.5px 2.5px #808080,inset -2.5px -2.5px #fff,inset 5px 5px #404040,inset -5px -5px #d4d0c8;background:#fff;"></div>
<div class="t" style="left:326.0px;top:463.2px;font-size:28.75px;-webkit-text-stroke:1.05px #6a6a6a;line-height:28.75px;color:#6a6a6a;transform:scaleX(1.0981);">Señorial Clásica siglo XVIII</div>
<div class="t" style="left:156.2px;top:523.4px;font-size:30px;-webkit-text-stroke:0.62px #801020;line-height:30px;color:#800818;transform:scaleX(0.8853);">Descripción</div>
<div style="left:317.5px;top:521.25px;width:866.25px;height:491.25px;box-shadow:inset 2.5px 2.5px #808080,inset -2.5px -2.5px #fff,inset 5px 5px #404040,inset -5px -5px #d4d0c8;background:#fff;"></div>
<div style="left:1140px;top:527px;width:38.75px;height:480px;background:repeating-conic-gradient(#fff 0 25%,#d4d0c8 0 50%) 0 0/5px 5px;"></div>
<div style="left:1140px;top:527px;width:38.75px;height:37px;box-shadow:inset 2.5px 2.5px #fff,inset -2.5px -2.5px #404040,inset 5px 5px #d4d0c8,inset -5px -5px #808080;background:#d4d0c8;"></div>
<svg style="position:absolute;left:1140px;top:527px;overflow:visible" width="40" height="37.5" viewBox="0 0 16 15"><path d="M4.5 9.5H11.5L8 6Z" fill="#808080"/></svg>
<div style="left:1140px;top:970px;width:38.75px;height:38px;box-shadow:inset 2.5px 2.5px #fff,inset -2.5px -2.5px #404040,inset 5px 5px #d4d0c8,inset -5px -5px #808080;background:#d4d0c8;"></div>
<svg style="position:absolute;left:1140px;top:970px;overflow:visible" width="40" height="37.5" viewBox="0 0 16 15"><path d="M4.5 5.5H11.5L8 9Z" fill="#808080"/></svg>
<div class="t" style="left:326.0px;top:531.7px;font-size:28.75px;-webkit-text-stroke:1.05px #6a6a6a;letter-spacing:0.38px;line-height:28.75px;color:#6a6a6a;transform:scaleX(1.0295);">* COMPOSICIÓN:</div>
<div class="t" style="left:334.5px;top:564.2px;font-size:28.75px;-webkit-text-stroke:1.05px #6a6a6a;letter-spacing:0.38px;line-height:28.75px;color:#6a6a6a;transform:scaleX(1.0781);">1. Muros lisos: Ocre intenso o almagra intenso.</div>
<div class="t" style="left:334.5px;top:596.7px;font-size:28.75px;-webkit-text-stroke:1.05px #6a6a6a;letter-spacing:0.38px;line-height:28.75px;color:#6a6a6a;transform:scaleX(1.0989);">2. Zócalo y recerco del portalón de acceso: Si existe</div>
<div class="t" style="left:326.0px;top:629.2px;font-size:28.75px;-webkit-text-stroke:1.05px #6a6a6a;letter-spacing:0.38px;line-height:28.75px;color:#6a6a6a;transform:scaleX(1.0886);">debe dejarse la piedra vista.</div>
<div class="t" style="left:334.5px;top:661.7px;font-size:28.75px;-webkit-text-stroke:1.05px #6a6a6a;letter-spacing:0.38px;line-height:28.75px;color:#6a6a6a;transform:scaleX(1.0960);">3. Textura: Mate -rugosa, propia del revoco coloreado.</div>
<div class="t" style="left:326.0px;top:694.2px;font-size:28.75px;-webkit-text-stroke:1.05px #6a6a6a;letter-spacing:0.38px;line-height:28.75px;color:#6a6a6a;transform:scaleX(1.0560);">* ORNAMENTACIÓN:</div>
<div class="t" style="left:334.5px;top:726.7px;font-size:28.75px;-webkit-text-stroke:1.05px #6a6a6a;letter-spacing:0.38px;line-height:28.75px;color:#6a6a6a;transform:scaleX(1.1034);">1. Ausencia de recercos</div>
<div class="t" style="left:334.5px;top:759.2px;font-size:28.75px;-webkit-text-stroke:1.05px #6a6a6a;letter-spacing:0.38px;line-height:28.75px;color:#6a6a6a;transform:scaleX(1.0743);">2. Jambas: Azul.</div>
<div class="t" style="left:334.5px;top:791.7px;font-size:28.75px;-webkit-text-stroke:1.05px #6a6a6a;letter-spacing:0.38px;line-height:28.75px;color:#6a6a6a;transform:scaleX(1.0886);">3. Dinteles: Si existe dintel de madera se deja visto</div>
<div class="t" style="left:326.0px;top:824.2px;font-size:28.75px;-webkit-text-stroke:1.05px #6a6a6a;letter-spacing:0.38px;line-height:28.75px;color:#6a6a6a;transform:scaleX(1.0974);">color caoba oscuro.</div>
<div class="t" style="left:326.0px;top:856.7px;font-size:28.75px;-webkit-text-stroke:1.05px #6a6a6a;letter-spacing:0.38px;line-height:28.75px;color:#6a6a6a;transform:scaleX(1.0610);">* CARPINTERÍAS Y MADERAS:Caoba oscuro.</div>
<div class="t" style="left:326.0px;top:889.2px;font-size:28.75px;-webkit-text-stroke:1.05px #6a6a6a;letter-spacing:0.38px;line-height:28.75px;color:#6a6a6a;transform:scaleX(1.0640);">* CERRAJERÍA: Negro forja mate.</div>
<div style="left:1202.5px;top:452.5px;width:175px;height:123.5px;border:2.5px solid #000;box-shadow:inset 2.5px 2.5px #fff,inset -2.5px -2.5px #404040,inset -5px -5px #808080;background:#d4d0c8;"></div>
<svg style="position:absolute;left:1249.25px;top:459.5px;overflow:visible" width="80" height="80" viewBox="0 0 32 32"><path d="M0.5 19Q8 9 19 9Q27 10 32 18Q24 27 14 31Q7 28 0.5 21Z" fill="#000"/><path d="M6.5 18.5Q12 12 19 12.5Q25 13.5 27.5 18Q21 22.5 15 22.5Q9.5 21.5 6.5 18.5Z" fill="#fff"/><circle cx="15.8" cy="16.8" r="5.4" fill="#0000b0"/><path d="M18 13.5L19 15.5" stroke="#fff" stroke-width="1.1"/><path d="M11 14Q10 18 13 21" stroke="#fff" stroke-width="0.9" fill="none"/><path d="M3.5 21.5Q14 26.5 25.5 22" fill="none" stroke="#fff" stroke-width="0.9"/><path d="M0.5 5.8Q6 0.6 17 0.5Q26 0.8 31 5.2" fill="none" stroke="#000" stroke-width="1.9"/><path d="M1 9.5L12.5 3.6M2 11.3L13.5 5.5M3.5 13L14 7.5" stroke="#000" stroke-width="0.75"/></svg>
<div class="t" style="left:1222.5px;top:535.7px;font-size:27.5px;line-height:27.5px;color:#000;transform:scaleX(0.9598);">Ver Imagen</div>
<div style="left:1269px;top:562px;width:8.5px;height:2.25px;background:#000;"></div>
<div class="t" style="left:110.0px;top:1034.6px;font-size:30px;-webkit-text-stroke:0.62px #801020;line-height:30px;color:#800818;transform:scaleX(0.8716);">Nombre Imagen</div>
<div style="left:317.5px;top:1022.5px;width:797.5px;height:52.5px;box-shadow:inset 2.5px 2.5px #808080,inset -2.5px -2.5px #fff,inset 5px 5px #404040,inset -5px -5px #d4d0c8;background:#fff;"></div>
<div class="t" style="left:326.0px;top:1033.2px;font-size:28.75px;-webkit-text-stroke:1.05px #6a6a6a;line-height:28.75px;color:#6a6a6a;transform:scaleX(1.0841);">SeñorialClasicasXVIII.bmp</div>
<div style="left:1119.5px;top:1022.5px;width:62.5px;height:52.5px;box-shadow:inset 2.5px 2.5px #fff,inset -2.5px -2.5px #404040,inset 5px 5px #d4d0c8,inset -5px -5px #808080;background:#d4d0c8;"></div>
<svg style="position:absolute;left:1130.75px;top:1028.75px;overflow:visible" width="40" height="40" viewBox="0 0 16 16"><path d="M2 11H9M2 12.2H9" stroke="#808080" stroke-width="0.9"/><path d="M2 12.7H9" stroke="#fff" stroke-width="0.5"/><path d="M5 5.5L12 12.5M12 4V12.5" stroke="#808080" stroke-width="1.1" fill="none"/><path d="M7 9L10 12" stroke="#808080" stroke-width="1.5"/></svg>
<div style="left:92.5px;top:1121.5px;width:1308.5px;height:45px;box-shadow:inset 2.5px 2.5px #808080,inset -2.5px -2.5px #fff;"></div>
<div style="left:971.5px;top:1315.75px;width:1243.5px;height:416.25px;box-shadow:inset 2.5px 2.5px #d4d0c8,inset -2.5px -2.5px #404040,inset 5px 5px #fff,inset -5px -5px #808080;background:#d4d0c8;"></div>
<div style="left:979px;top:1322.25px;width:1228.5px;height:44px;background:linear-gradient(to right,#808080,#c0c0c0);"></div>
<svg style="position:absolute;left:982.75px;top:1324.25px;overflow:visible" width="40" height="40" viewBox="0 0 16 16"><path d="M8.9 0.3L15.9 3.6L14.9 5.1V11.8L11.9 11.9V5L7.4 0.4Z" fill="#b8b8b8" stroke="#000" stroke-width="0.8"/><path d="M2.9 4.7L7.4 0.3L11.8 4.7Z" fill="#e8e8e8" stroke="#000" stroke-width="0.8"/><circle cx="7.4" cy="3.2" r="1" fill="#a0c040" stroke="#000" stroke-width="0.5"/><rect x="3.9" y="5" width="8" height="6.2" fill="#fff" stroke="#000" stroke-width="0.7"/><rect x="4.6" y="6" width="2.4" height="2.4" fill="#f0f060"/><rect x="4.6" y="6" width="1.4" height="1.4" fill="#000"/><rect x="9" y="6" width="2.4" height="2.4" fill="#f0f060"/><rect x="9" y="6" width="1.4" height="1.4" fill="#000"/><path d="M-0.2 13.2L2 11.6H3.2L4 10.8H8.5L9.6 11.8H11.8L12 14.2L10.5 15.2H0.2Z" fill="#d00010" stroke="#000" stroke-width="0.7"/><path d="M3.5 11H8L8.6 12H3Z" fill="#30c8c8"/><circle cx="2" cy="14.6" r="1.1" fill="#e0e0e0" stroke="#000" stroke-width="0.5"/><circle cx="7.6" cy="14.6" r="1.1" fill="#e0e0e0" stroke="#000" stroke-width="0.5"/></svg>
<div class="t" style="left:1028.5px;top:1333.5px;font-size:27.5px;font-weight:bold;line-height:27.5px;color:#d4d0c8;transform:scaleX(1.0181);">Calles</div>
<div style="left:2164px;top:1326.75px;width:40px;height:35px;box-shadow:inset 2.5px 2.5px #fff,inset -2.5px -2.5px #404040,inset 5px 5px #d4d0c8,inset -5px -5px #808080;background:#d4d0c8;"></div>
<svg style="position:absolute;left:2164px;top:1326.75px;overflow:visible" width="40" height="35" viewBox="0 0 16 14"><path d="M4.6 3.4L11.2 10.2M11.2 3.4L4.6 10.2" stroke="#000" stroke-width="1.25"/></svg>
<div style="left:979px;top:1368.5px;width:1228.5px;height:70px;box-shadow:inset 2.5px 2.5px #fff,inset -2.5px -2.5px #808080;"></div>
<div style="left:982.5px;top:1373.5px;width:60px;height:51px;box-shadow:inset 2.5px 2.5px #fff,inset -2.5px -2.5px #000,inset 5px 5px #d4d0c8,inset -5px -5px #404040,0 0 0 0.03px #000;background:#d4d0c8;border:2.5px solid #000;"></div>
<svg style="position:absolute;left:992.5px;top:1379px;overflow:visible" width="40" height="40" viewBox="0 0 16 16"><path d="M2.9 1H10.4L13.1 3.7V13.1Q13.1 13.6 12.6 13.6H3.4Q2.9 13.6 2.9 13.1Z" fill="#fff" stroke="#000" stroke-width="1.15" stroke-linejoin="round"/><path d="M10.2 1.2V3.9H12.9" fill="none" stroke="#000" stroke-width="0.8"/></svg>
<div style="left:1049px;top:1373.5px;width:60px;height:51px;box-shadow:inset 2.5px 2.5px #fff,inset -2.5px -2.5px #404040,inset -5px -5px #808080;background:#d4d0c8;"></div>
<svg style="position:absolute;left:1059px;top:1379px;overflow:visible" width="40" height="40" viewBox="0 0 16 16"><rect x="1.8" y="1.3" width="10.8" height="12.6" fill="#fff" stroke="#000" stroke-width="1.1"/><path d="M3 3.1h2M5.8 3.1h2M3 5.1h2M5.8 5.1h2M3 7.3h1M4.8 7.3h1.6M3 9.3h1M4.8 9.3h1.6M3 11.3h2M6 11.3h2" stroke="#222" stroke-width="1"/><path d="M8.6 11.8L13.2 1.6L15.1 2.5L10.5 12.7Z" fill="#ffff40" stroke="#000" stroke-width="0.8"/><path d="M8.6 11.8L9 13.6L10.5 12.7Z" fill="#000"/><circle cx="14.4" cy="1.4" r="1.3" fill="#800080"/></svg>
<div style="left:1111.5px;top:1373.5px;width:61px;height:51px;box-shadow:inset 2.5px 2.5px #fff,inset -2.5px -2.5px #404040,inset -5px -5px #808080;background:#d4d0c8;"></div>
<div style="left:1122px;top:1379px;width:40px;height:40px;background:#c8c8c8;"></div>
<svg style="position:absolute;left:1122px;top:1379px;overflow:visible" width="40" height="40" viewBox="0 0 16 16"><path d="M1.2 8.6L7.7 1.8L14.6 2.2L8 9.6Z" fill="#ffff60" stroke="#000" stroke-width="1"/><path d="M8 9.6L14.6 2.2L14.8 5.2L8.1 12.2Z" fill="#b0b000" stroke="#000" stroke-width="1"/><path d="M1.2 8.6V11Q1.2 12.2 2.5 12.2H8.1L8 9.6Z" fill="#fff" stroke="#000" stroke-width="1"/></svg>
<div style="left:1177.5px;top:1373.5px;width:60px;height:51px;box-shadow:inset 2.5px 2.5px #fff,inset -2.5px -2.5px #404040,inset -5px -5px #808080;background:#d4d0c8;"></div>
<div style="left:1187.5px;top:1379px;width:40px;height:40px;background:#c8c8c8;"></div>
<svg style="position:absolute;left:1187.5px;top:1379px;overflow:visible" width="40" height="40" viewBox="0 0 16 16"><path d="M1.6 4Q1.6 0.4 3.7 0.4Q5.8 0.4 5.8 4L6.8 7.5V13.2H0V8.5Z" fill="#000"/><path d="M14.4 4Q14.4 0.4 12.3 0.4Q10.2 0.4 10.2 4L9.2 7.5V13.2H16V8.5Z" fill="#000"/><rect x="6" y="5.5" width="4" height="4" fill="#000"/><ellipse cx="3.6" cy="2.2" rx="0.6" ry="0.9" fill="#fff"/><ellipse cx="12.4" cy="2.2" rx="0.6" ry="0.9" fill="#fff"/><ellipse cx="2.4" cy="7.5" rx="0.7" ry="1.4" fill="#fff"/><ellipse cx="9.6" cy="7.5" rx="0.7" ry="1.4" fill="#fff"/><ellipse cx="1.6" cy="11.4" rx="0.6" ry="1" fill="#fff"/><ellipse cx="10.8" cy="11.4" rx="0.6" ry="1" fill="#fff"/><ellipse cx="7.8" cy="7.2" rx="0.5" ry="0.9" fill="#fff"/></svg>
<div style="left:1374px;top:1373.5px;width:61.5px;height:51px;box-shadow:inset 2.5px 2.5px #fff,inset -2.5px -2.5px #404040,inset -5px -5px #808080;background:#d4d0c8;"></div>
<svg style="position:absolute;left:1384.75px;top:1379px;overflow:visible" width="40" height="40" viewBox="0 0 16 16"><path d="M2.6 6.6L5.9 12.1L11.8 1.4" fill="none" stroke="#fff" stroke-width="1.5" transform="translate(0.8,0.5)"/><path d="M2.6 6.6L5.9 12.1L11.8 1.4" fill="none" stroke="#7a7a7a" stroke-width="1.6"/></svg>
<div style="left:1441.5px;top:1373.5px;width:61px;height:51px;box-shadow:inset 2.5px 2.5px #fff,inset -2.5px -2.5px #404040,inset -5px -5px #808080;background:#d4d0c8;"></div>
<svg style="position:absolute;left:1452px;top:1379px;overflow:visible" width="40" height="40" viewBox="0 0 16 16"><path d="M3.2 1.8L12.8 12.3M12.8 1.8L3.2 12.3" fill="none" stroke="#fff" stroke-width="1.1" transform="translate(0.7,0.7)"/><path d="M3.2 1.8L12.8 12.3M12.8 1.8L3.2 12.3" fill="none" stroke="#888" stroke-width="1.1"/></svg>
<div style="left:1581.5px;top:1373.5px;width:60px;height:51px;box-shadow:inset 2.5px 2.5px #fff,inset -2.5px -2.5px #404040,inset -5px -5px #808080;background:#d4d0c8;"></div>
<div style="left:1591.5px;top:1379px;width:40px;height:40px;background:#c8c8c8;"></div>
<svg style="position:absolute;left:1591.5px;top:1379px;overflow:visible" width="40" height="40" viewBox="0 0 16 16"><g transform="translate(0.8,0.8)"><rect x="3.6" y="1.7" width="1.7" height="12.4" fill="#fff"/><path d="M5.3 7.9L11.1 1.8V14Z" fill="#fff"/></g><rect x="3.6" y="1.7" width="1.7" height="12.4" fill="#808080"/><path d="M5.3 7.9L11.1 1.8V14Z" fill="#808080"/></svg>
<div style="left:1642.75px;top:1373.5px;width:57.5px;height:51px;box-shadow:inset 2.5px 2.5px #fff,inset -2.5px -2.5px #404040,inset -5px -5px #808080;background:#d4d0c8;"></div>
<div style="left:1651.5px;top:1379px;width:40px;height:40px;background:#c8c8c8;"></div>
<svg style="position:absolute;left:1651.5px;top:1379px;overflow:visible" width="40" height="40" viewBox="0 0 16 16"><g transform="translate(0.8,0.8)"><path d="M4.9 7.9L11.1 2.3V13.5Z" fill="#fff"/></g><path d="M4.9 7.9L11.1 2.3V13.5Z" fill="#808080"/></svg>
<div style="left:1700.5px;top:1373.5px;width:58.5px;height:51px;box-shadow:inset 2.5px 2.5px #fff,inset -2.5px -2.5px #404040,inset -5px -5px #808080;background:#d4d0c8;"></div>
<div style="left:1709.75px;top:1379px;width:40px;height:40px;background:#c8c8c8;"></div>
<svg style="position:absolute;left:1709.75px;top:1379px;overflow:visible" width="40" height="40" viewBox="0 0 16 16"><path d="M11.6 7.9L5.3 2.3V13.5Z" fill="#000"/></svg>
<div style="left:1760px;top:1373.5px;width:60.5px;height:51px;box-shadow:inset 2.5px 2.5px #fff,inset -2.5px -2.5px #404040,inset -5px -5px #808080;background:#d4d0c8;"></div>
<div style="left:1770.25px;top:1379px;width:40px;height:40px;background:#c8c8c8;"></div>
<svg style="position:absolute;left:1770.25px;top:1379px;overflow:visible" width="40" height="40" viewBox="0 0 16 16"><rect x="10.4" y="1.7" width="1.7" height="12.4" fill="#000"/><path d="M10.4 7.9L4.6 1.8V14Z" fill="#000"/></svg>
<div style="left:1901.5px;top:1373.5px;width:62.5px;height:51px;box-shadow:inset 2.5px 2.5px #fff,inset -2.5px -2.5px #404040,inset -5px -5px #808080;background:#d4d0c8;"></div>
<div style="left:1912.75px;top:1379px;width:40px;height:40px;background:#c8c8c8;"></div>
<svg style="position:absolute;left:1912.75px;top:1379px;overflow:visible" width="40" height="40" viewBox="0 0 16 16"><path d="M4.5 0.8H11.5L13 2.5L11.3 6.5H3Z" fill="#fff" stroke="#000" stroke-width="1"/><path d="M5 2.8h5.5M4.5 4.6h5.5" stroke="#000" stroke-width="0.9"/><path d="M1.3 8Q1.3 6.2 3 6.2H12.5Q14.5 6.2 14.5 8V11.8Q14.5 13.6 12.5 13.6H3Q1.3 13.6 1.3 11.8Z" fill="#e8e8e8" stroke="#000" stroke-width="1.2"/><path d="M1.5 9.3H14.3M1.5 11.5H14.3" stroke="#000" stroke-width="0.9"/><path d="M14.5 7L15.5 8V11L14.5 12" fill="none" stroke="#000" stroke-width="0.8"/><rect x="6.2" y="9.9" width="1.2" height="1" fill="#f00"/><rect x="7.6" y="9.9" width="1.2" height="1" fill="#0c0"/><rect x="9" y="9.9" width="1.2" height="1" fill="#f80"/></svg>
<div style="left:2081.5px;top:1373.5px;width:72.5px;height:51px;box-shadow:inset 2.5px 2.5px #fff,inset -2.5px -2.5px #404040,inset -5px -5px #808080;background:#d4d0c8;"></div>
<div style="left:2097.75px;top:1379px;width:40px;height:40px;background:#c8c8c8;"></div>
<svg style="position:absolute;left:2097.75px;top:1379px;overflow:visible" width="40" height="40" viewBox="0 0 16 16"><path d="M7.2 2.2H12.2V12.5H7.2Z" fill="#ffffb0" stroke="#000" stroke-width="1"/><path d="M9.6 2.2L13 1.2V12L9.6 15.4Z" fill="#e89030" stroke="#000" stroke-width="1"/><path d="M0.6 5.2H3.6V3.2L7.2 6.2L3.6 9.2V7.2H0.6Z" fill="#000" stroke="#000" stroke-width="0.6"/><path d="M5.2 11.5H7.2" stroke="#000" fill="none" stroke-width="1"/><path d="M5.2 10V11.5" stroke="#000" stroke-width="0.8"/></svg>
<div class="t" style="left:1036.5px;top:1484.1px;font-size:30px;-webkit-text-stroke:0.62px #801020;line-height:30px;color:#800818;transform:scaleX(0.8782);">Código</div>
<div style="left:1148.75px;top:1475.75px;width:212.5px;height:49.25px;box-shadow:inset 2.5px 2.5px #808080,inset -2.5px -2.5px #fff,inset 5px 5px #404040,inset -5px -5px #d4d0c8;background:#fff;"></div>
<div class="t" style="left:1155.0px;top:1485.2px;font-size:28.75px;-webkit-text-stroke:1.05px #6a6a6a;line-height:28.75px;color:#6a6a6a;transform:scaleX(0.9909);">ARI</div>
<div class="t" style="left:1033.5px;top:1546.4px;font-size:30px;-webkit-text-stroke:0.62px #801020;line-height:30px;color:#800818;transform:scaleX(0.8575);">Nombre</div>
<div style="left:1148.75px;top:1536.75px;width:865px;height:49.25px;box-shadow:inset 2.5px 2.5px #808080,inset -2.5px -2.5px #fff,inset 5px 5px #404040,inset -5px -5px #d4d0c8;background:#fff;"></div>
<div class="t" style="left:1155.0px;top:1544.7px;font-size:28.75px;-webkit-text-stroke:1.05px #6a6a6a;line-height:28.75px;color:#6a6a6a;transform:scaleX(1.1209);">Actor Rivelles</div>
<div style="left:979px;top:1681.75px;width:1228.5px;height:43.5px;box-shadow:inset 2.5px 2.5px #808080,inset -2.5px -2.5px #fff;"></div>
<div style="left:1492.5px;top:247.5px;width:752px;height:810px;box-shadow:inset 2.5px 2.5px #d4d0c8,inset -2.5px -2.5px #404040,inset 5px 5px #fff,inset -5px -5px #808080;background:#d4d0c8;"></div>
<div style="left:1500px;top:254px;width:737px;height:44px;background:linear-gradient(to right,#0a246a,#a6caf0);"></div>
<svg style="position:absolute;left:1503.75px;top:256px;overflow:visible" width="40" height="40" viewBox="0 0 16 16"><path d="M8.9 0.3L15.9 3.6L14.9 5.1V11.8L11.9 11.9V5L7.4 0.4Z" fill="#b8b8b8" stroke="#000" stroke-width="0.8"/><path d="M2.9 4.7L7.4 0.3L11.8 4.7Z" fill="#e8e8e8" stroke="#000" stroke-width="0.8"/><circle cx="7.4" cy="3.2" r="1" fill="#a0c040" stroke="#000" stroke-width="0.5"/><rect x="3.9" y="5" width="8" height="6.2" fill="#fff" stroke="#000" stroke-width="0.7"/><rect x="4.6" y="6" width="2.4" height="2.4" fill="#f0f060"/><rect x="4.6" y="6" width="1.4" height="1.4" fill="#000"/><rect x="9" y="6" width="2.4" height="2.4" fill="#f0f060"/><rect x="9" y="6" width="1.4" height="1.4" fill="#000"/><path d="M-0.2 13.2L2 11.6H3.2L4 10.8H8.5L9.6 11.8H11.8L12 14.2L10.5 15.2H0.2Z" fill="#d00010" stroke="#000" stroke-width="0.7"/><path d="M3.5 11H8L8.6 12H3Z" fill="#30c8c8"/><circle cx="2" cy="14.6" r="1.1" fill="#e0e0e0" stroke="#000" stroke-width="0.5"/><circle cx="7.6" cy="14.6" r="1.1" fill="#e0e0e0" stroke="#000" stroke-width="0.5"/></svg>
<div class="t" style="left:1550.0px;top:265.2px;font-size:27.5px;font-weight:bold;line-height:27.5px;color:#fff;transform:scaleX(1.1269);">Imágen</div>
<div style="left:2193.5px;top:258.5px;width:40px;height:35px;box-shadow:inset 2.5px 2.5px #fff,inset -2.5px -2.5px #404040,inset 5px 5px #d4d0c8,inset -5px -5px #808080;background:#d4d0c8;"></div>
<svg style="position:absolute;left:2193.5px;top:258.5px;overflow:visible" width="40" height="35" viewBox="0 0 16 14"><path d="M4.6 3.4L11.2 10.2M11.2 3.4L4.6 10.2" stroke="#000" stroke-width="1.25"/></svg>
<div style="left:1500px;top:302.5px;width:737px;height:747.5px;box-shadow:inset 2.5px 2.5px #808080,inset 5px 5px #404040,inset -2.5px -2.5px #fff,inset -5px -5px #d4d0c8;background:#f2f0ec;"></div>
<svg style="position:absolute;left:1500px;top:300px;overflow:visible" width="750" height="760" viewBox="0 0 750 760"><defs><linearGradient id="gr" x1="0" y1="0" x2="1" y2="1"><stop offset="0" stop-color="#d88068"/><stop offset="0.5" stop-color="#f0a888"/><stop offset="1" stop-color="#d88068"/></linearGradient></defs><rect x="20" y="44" width="711" height="574" fill="#e8977a"/><rect x="20" y="44" width="711" height="574" fill="url(#gr)" opacity="0.25"/><path d="M20.5 44V618M730.5 44V618" stroke="#a05a48" stroke-width="1.2"/><path d="M20 617H731V720L600 722L400 724L100 726L20 725Z" fill="#f2e2da"/><path d="M20 617H731" stroke="#6a5a58" stroke-width="1.3"/><path d="M60 617V632" stroke="#6a5a58" stroke-width="1.3"/><path d="M108 617V632" stroke="#6a5a58" stroke-width="1.3"/><path d="M156 617V632" stroke="#6a5a58" stroke-width="1.3"/><path d="M204 617V632" stroke="#6a5a58" stroke-width="1.3"/><path d="M252 617V632" stroke="#6a5a58" stroke-width="1.3"/><path d="M300 617V632" stroke="#6a5a58" stroke-width="1.3"/><path d="M348 617V632" stroke="#6a5a58" stroke-width="1.3"/><path d="M396 617V632" stroke="#6a5a58" stroke-width="1.3"/><path d="M444 617V632" stroke="#6a5a58" stroke-width="1.3"/><path d="M492 617V632" stroke="#6a5a58" stroke-width="1.3"/><path d="M540 617V632" stroke="#6a5a58" stroke-width="1.3"/><path d="M588 617V632" stroke="#6a5a58" stroke-width="1.3"/><path d="M636 617V632" stroke="#6a5a58" stroke-width="1.3"/><path d="M684 617V632" stroke="#6a5a58" stroke-width="1.3"/><path d="M20 632H731" stroke="#6a5a58" stroke-width="1.3"/><path d="M35 632V647" stroke="#6a5a58" stroke-width="1.3"/><path d="M83 632V647" stroke="#6a5a58" stroke-width="1.3"/><path d="M131 632V647" stroke="#6a5a58" stroke-width="1.3"/><path d="M179 632V647" stroke="#6a5a58" stroke-width="1.3"/><path d="M227 632V647" stroke="#6a5a58" stroke-width="1.3"/><path d="M275 632V647" stroke="#6a5a58" stroke-width="1.3"/><path d="M323 632V647" stroke="#6a5a58" stroke-width="1.3"/><path d="M371 632V647" stroke="#6a5a58" stroke-width="1.3"/><path d="M419 632V647" stroke="#6a5a58" stroke-width="1.3"/><path d="M467 632V647" stroke="#6a5a58" stroke-width="1.3"/><path d="M515 632V647" stroke="#6a5a58" stroke-width="1.3"/><path d="M563 632V647" stroke="#6a5a58" stroke-width="1.3"/><path d="M611 632V647" stroke="#6a5a58" stroke-width="1.3"/><path d="M659 632V647" stroke="#6a5a58" stroke-width="1.3"/><path d="M707 632V647" stroke="#6a5a58" stroke-width="1.3"/><path d="M20 647H731" stroke="#6a5a58" stroke-width="1.3"/><path d="M60 647V662" stroke="#6a5a58" stroke-width="1.3"/><path d="M108 647V662" stroke="#6a5a58" stroke-width="1.3"/><path d="M156 647V662" stroke="#6a5a58" stroke-width="1.3"/><path d="M204 647V662" stroke="#6a5a58" stroke-width="1.3"/><path d="M252 647V662" stroke="#6a5a58" stroke-width="1.3"/><path d="M300 647V662" stroke="#6a5a58" stroke-width="1.3"/><path d="M348 647V662" stroke="#6a5a58" stroke-width="1.3"/><path d="M396 647V662" stroke="#6a5a58" stroke-width="1.3"/><path d="M444 647V662" stroke="#6a5a58" stroke-width="1.3"/><path d="M492 647V662" stroke="#6a5a58" stroke-width="1.3"/><path d="M540 647V662" stroke="#6a5a58" stroke-width="1.3"/><path d="M588 647V662" stroke="#6a5a58" stroke-width="1.3"/><path d="M636 647V662" stroke="#6a5a58" stroke-width="1.3"/><path d="M684 647V662" stroke="#6a5a58" stroke-width="1.3"/><path d="M20 662H731" stroke="#6a5a58" stroke-width="1.3"/><path d="M35 662V677" stroke="#6a5a58" stroke-width="1.3"/><path d="M83 662V677" stroke="#6a5a58" stroke-width="1.3"/><path d="M131 662V677" stroke="#6a5a58" stroke-width="1.3"/><path d="M179 662V677" stroke="#6a5a58" stroke-width="1.3"/><path d="M227 662V677" stroke="#6a5a58" stroke-width="1.3"/><path d="M275 662V677" stroke="#6a5a58" stroke-width="1.3"/><path d="M323 662V677" stroke="#6a5a58" stroke-width="1.3"/><path d="M371 662V677" stroke="#6a5a58" stroke-width="1.3"/><path d="M419 662V677" stroke="#6a5a58" stroke-width="1.3"/><path d="M467 662V677" stroke="#6a5a58" stroke-width="1.3"/><path d="M515 662V677" stroke="#6a5a58" stroke-width="1.3"/><path d="M563 662V677" stroke="#6a5a58" stroke-width="1.3"/><path d="M611 662V677" stroke="#6a5a58" stroke-width="1.3"/><path d="M659 662V677" stroke="#6a5a58" stroke-width="1.3"/><path d="M707 662V677" stroke="#6a5a58" stroke-width="1.3"/><path d="M20 677H731" stroke="#6a5a58" stroke-width="1.3"/><path d="M60 677V692" stroke="#6a5a58" stroke-width="1.3"/><path d="M108 677V692" stroke="#6a5a58" stroke-width="1.3"/><path d="M156 677V692" stroke="#6a5a58" stroke-width="1.3"/><path d="M204 677V692" stroke="#6a5a58" stroke-width="1.3"/><path d="M252 677V692" stroke="#6a5a58" stroke-width="1.3"/><path d="M300 677V692" stroke="#6a5a58" stroke-width="1.3"/><path d="M348 677V692" stroke="#6a5a58" stroke-width="1.3"/><path d="M396 677V692" stroke="#6a5a58" stroke-width="1.3"/><path d="M444 677V692" stroke="#6a5a58" stroke-width="1.3"/><path d="M492 677V692" stroke="#6a5a58" stroke-width="1.3"/><path d="M540 677V692" stroke="#6a5a58" stroke-width="1.3"/><path d="M588 677V692" stroke="#6a5a58" stroke-width="1.3"/><path d="M636 677V692" stroke="#6a5a58" stroke-width="1.3"/><path d="M684 677V692" stroke="#6a5a58" stroke-width="1.3"/><path d="M20 692H731" stroke="#6a5a58" stroke-width="1.3"/><path d="M35 692V707" stroke="#6a5a58" stroke-width="1.3"/><path d="M83 692V707" stroke="#6a5a58" stroke-width="1.3"/><path d="M131 692V707" stroke="#6a5a58" stroke-width="1.3"/><path d="M179 692V707" stroke="#6a5a58" stroke-width="1.3"/><path d="M227 692V707" stroke="#6a5a58" stroke-width="1.3"/><path d="M275 692V707" stroke="#6a5a58" stroke-width="1.3"/><path d="M323 692V707" stroke="#6a5a58" stroke-width="1.3"/><path d="M371 692V707" stroke="#6a5a58" stroke-width="1.3"/><path d="M419 692V707" stroke="#6a5a58" stroke-width="1.3"/><path d="M467 692V707" stroke="#6a5a58" stroke-width="1.3"/><path d="M515 692V707" stroke="#6a5a58" stroke-width="1.3"/><path d="M563 692V707" stroke="#6a5a58" stroke-width="1.3"/><path d="M611 692V707" stroke="#6a5a58" stroke-width="1.3"/><path d="M659 692V707" stroke="#6a5a58" stroke-width="1.3"/><path d="M707 692V707" stroke="#6a5a58" stroke-width="1.3"/><path d="M20 707H731" stroke="#6a5a58" stroke-width="1.3"/><path d="M60 707V722" stroke="#6a5a58" stroke-width="1.3"/><path d="M108 707V722" stroke="#6a5a58" stroke-width="1.3"/><path d="M156 707V722" stroke="#6a5a58" stroke-width="1.3"/><path d="M204 707V722" stroke="#6a5a58" stroke-width="1.3"/><path d="M252 707V722" stroke="#6a5a58" stroke-width="1.3"/><path d="M300 707V722" stroke="#6a5a58" stroke-width="1.3"/><path d="M348 707V722" stroke="#6a5a58" stroke-width="1.3"/><path d="M396 707V722" stroke="#6a5a58" stroke-width="1.3"/><path d="M444 707V722" stroke="#6a5a58" stroke-width="1.3"/><path d="M492 707V722" stroke="#6a5a58" stroke-width="1.3"/><path d="M540 707V722" stroke="#6a5a58" stroke-width="1.3"/><path d="M588 707V722" stroke="#6a5a58" stroke-width="1.3"/><path d="M636 707V722" stroke="#6a5a58" stroke-width="1.3"/><path d="M684 707V722" stroke="#6a5a58" stroke-width="1.3"/><path d="M20 722H731" stroke="#6a5a58" stroke-width="1.3"/><rect x="20" y="25" width="710" height="19" fill="#7a4a38"/><path d="M20.0 37V28Q23.5 21 27.0 28V37Z" fill="#c89078" stroke="#4a2818" stroke-width="1.3"/><path d="M29.5 37V28Q33.0 21 36.5 28V37Z" fill="#e0ae96" stroke="#4a2818" stroke-width="1.3"/><path d="M39.0 37V28Q42.5 21 46.0 28V37Z" fill="#e0ae96" stroke="#4a2818" stroke-width="1.3"/><path d="M48.5 37V28Q52.0 21 55.5 28V37Z" fill="#c89078" stroke="#4a2818" stroke-width="1.3"/><path d="M58.0 37V28Q61.5 21 65.0 28V37Z" fill="#e0ae96" stroke="#4a2818" stroke-width="1.3"/><path d="M67.5 37V28Q71.0 21 74.5 28V37Z" fill="#e0ae96" stroke="#4a2818" stroke-width="1.3"/><path d="M77.0 37V28Q80.5 21 84.0 28V37Z" fill="#c89078" stroke="#4a2818" stroke-width="1.3"/><path d="M86.5 37V28Q90.0 21 93.5 28V37Z" fill="#e0ae96" stroke="#4a2818" stroke-width="1.3"/><path d="M96.0 37V28Q99.5 21 103.0 28V37Z" fill="#e0ae96" stroke="#4a2818" stroke-width="1.3"/><path d="M105.5 37V28Q109.0 21 112.5 28V37Z" fill="#c89078" stroke="#4a2818" stroke-width="1.3"/><path d="M115.0 37V28Q118.5 21 122.0 28V37Z" fill="#e0ae96" stroke="#4a2818" stroke-width="1.3"/><path d="M124.5 37V28Q128.0 21 131.5 28V37Z" fill="#e0ae96" stroke="#4a2818" stroke-width="1.3"/><path d="M134.0 37V28Q137.5 21 141.0 28V37Z" fill="#c89078" stroke="#4a2818" stroke-width="1.3"/><path d="M143.5 37V28Q147.0 21 150.5 28V37Z" fill="#e0ae96" stroke="#4a2818" stroke-width="1.3"/><path d="M153.0 37V28Q156.5 21 160.0 28V37Z" fill="#e0ae96" stroke="#4a2818" stroke-width="1.3"/><path d="M162.5 37V28Q166.0 21 169.5 28V37Z" fill="#c89078" stroke="#4a2818" stroke-width="1.3"/><path d="M172.0 37V28Q175.5 21 179.0 28V37Z" fill="#e0ae96" stroke="#4a2818" stroke-width="1.3"/><path d="M181.5 37V28Q185.0 21 188.5 28V37Z" fill="#e0ae96" stroke="#4a2818" stroke-width="1.3"/><path d="M191.0 37V28Q194.5 21 198.0 28V37Z" fill="#c89078" stroke="#4a2818" stroke-width="1.3"/><path d="M200.5 37V28Q204.0 21 207.5 28V37Z" fill="#e0ae96" stroke="#4a2818" stroke-width="1.3"/><path d="M210.0 37V28Q213.5 21 217.0 28V37Z" fill="#e0ae96" stroke="#4a2818" stroke-width="1.3"/><path d="M219.5 37V28Q223.0 21 226.5 28V37Z" fill="#c89078" stroke="#4a2818" stroke-width="1.3"/><path d="M229.0 37V28Q232.5 21 236.0 28V37Z" fill="#e0ae96" stroke="#4a2818" stroke-width="1.3"/><path d="M238.5 37V28Q242.0 21 245.5 28V37Z" fill="#e0ae96" stroke="#4a2818" stroke-width="1.3"/><path d="M248.0 37V28Q251.5 21 255.0 28V37Z" fill="#c89078" stroke="#4a2818" stroke-width="1.3"/><path d="M257.5 37V28Q261.0 21 264.5 28V37Z" fill="#e0ae96" stroke="#4a2818" stroke-width="1.3"/><path d="M267.0 37V28Q270.5 21 274.0 28V37Z" fill="#e0ae96" stroke="#4a2818" stroke-width="1.3"/><path d="M276.5 37V28Q280.0 21 283.5 28V37Z" fill="#c89078" stroke="#4a2818" stroke-width="1.3"/><path d="M286.0 37V28Q289.5 21 293.0 28V37Z" fill="#e0ae96" stroke="#4a2818" stroke-width="1.3"/><path d="M295.5 37V28Q299.0 21 302.5 28V37Z" fill="#e0ae96" stroke="#4a2818" stroke-width="1.3"/><path d="M305.0 37V28Q308.5 21 312.0 28V37Z" fill="#c89078" stroke="#4a2818" stroke-width="1.3"/><path d="M314.5 37V28Q318.0 21 321.5 28V37Z" fill="#e0ae96" stroke="#4a2818" stroke-width="1.3"/><path d="M324.0 37V28Q327.5 21 331.0 28V37Z" fill="#e0ae96" stroke="#4a2818" stroke-width="1.3"/><path d="M333.5 37V28Q337.0 21 340.5 28V37Z" fill="#c89078" stroke="#4a2818" stroke-width="1.3"/><path d="M343.0 37V28Q346.5 21 350.0 28V37Z" fill="#e0ae96" stroke="#4a2818" stroke-width="1.3"/><path d="M352.5 37V28Q356.0 21 359.5 28V37Z" fill="#e0ae96" stroke="#4a2818" stroke-width="1.3"/><path d="M362.0 37V28Q365.5 21 369.0 28V37Z" fill="#c89078" stroke="#4a2818" stroke-width="1.3"/><path d="M371.5 37V28Q375.0 21 378.5 28V37Z" fill="#e0ae96" stroke="#4a2818" stroke-width="1.3"/><path d="M381.0 37V28Q384.5 21 388.0 28V37Z" fill="#e0ae96" stroke="#4a2818" stroke-width="1.3"/><path d="M390.5 37V28Q394.0 21 397.5 28V37Z" fill="#c89078" stroke="#4a2818" stroke-width="1.3"/><path d="M400.0 37V28Q403.5 21 407.0 28V37Z" fill="#e0ae96" stroke="#4a2818" stroke-width="1.3"/><path d="M409.5 37V28Q413.0 21 416.5 28V37Z" fill="#e0ae96" stroke="#4a2818" stroke-width="1.3"/><path d="M419.0 37V28Q422.5 21 426.0 28V37Z" fill="#c89078" stroke="#4a2818" stroke-width="1.3"/><path d="M428.5 37V28Q432.0 21 435.5 28V37Z" fill="#e0ae96" stroke="#4a2818" stroke-width="1.3"/><path d="M438.0 37V28Q441.5 21 445.0 28V37Z" fill="#e0ae96" stroke="#4a2818" stroke-width="1.3"/><path d="M447.5 37V28Q451.0 21 454.5 28V37Z" fill="#c89078" stroke="#4a2818" stroke-width="1.3"/><path d="M457.0 37V28Q460.5 21 464.0 28V37Z" fill="#e0ae96" stroke="#4a2818" stroke-width="1.3"/><path d="M466.5 37V28Q470.0 21 473.5 28V37Z" fill="#e0ae96" stroke="#4a2818" stroke-width="1.3"/><path d="M476.0 37V28Q479.5 21 483.0 28V37Z" fill="#c89078" stroke="#4a2818" stroke-width="1.3"/><path d="M485.5 37V28Q489.0 21 492.5 28V37Z" fill="#e0ae96" stroke="#4a2818" stroke-width="1.3"/><path d="M495.0 37V28Q498.5 21 502.0 28V37Z" fill="#e0ae96" stroke="#4a2818" stroke-width="1.3"/><path d="M504.5 37V28Q508.0 21 511.5 28V37Z" fill="#c89078" stroke="#4a2818" stroke-width="1.3"/><path d="M514.0 37V28Q517.5 21 521.0 28V37Z" fill="#e0ae96" stroke="#4a2818" stroke-width="1.3"/><path d="M523.5 37V28Q527.0 21 530.5 28V37Z" fill="#e0ae96" stroke="#4a2818" stroke-width="1.3"/><path d="M533.0 37V28Q536.5 21 540.0 28V37Z" fill="#c89078" stroke="#4a2818" stroke-width="1.3"/><path d="M542.5 37V28Q546.0 21 549.5 28V37Z" fill="#e0ae96" stroke="#4a2818" stroke-width="1.3"/><path d="M552.0 37V28Q555.5 21 559.0 28V37Z" fill="#e0ae96" stroke="#4a2818" stroke-width="1.3"/><path d="M561.5 37V28Q565.0 21 568.5 28V37Z" fill="#c89078" stroke="#4a2818" stroke-width="1.3"/><path d="M571.0 37V28Q574.5 21 578.0 28V37Z" fill="#e0ae96" stroke="#4a2818" stroke-width="1.3"/><path d="M580.5 37V28Q584.0 21 587.5 28V37Z" fill="#e0ae96" stroke="#4a2818" stroke-width="1.3"/><path d="M590.0 37V28Q593.5 21 597.0 28V37Z" fill="#c89078" stroke="#4a2818" stroke-width="1.3"/><path d="M599.5 37V28Q603.0 21 606.5 28V37Z" fill="#e0ae96" stroke="#4a2818" stroke-width="1.3"/><path d="M609.0 37V28Q612.5 21 616.0 28V37Z" fill="#e0ae96" stroke="#4a2818" stroke-width="1.3"/><path d="M618.5 37V28Q622.0 21 625.5 28V37Z" fill="#c89078" stroke="#4a2818" stroke-width="1.3"/><path d="M628.0 37V28Q631.5 21 635.0 28V37Z" fill="#e0ae96" stroke="#4a2818" stroke-width="1.3"/><path d="M637.5 37V28Q641.0 21 644.5 28V37Z" fill="#e0ae96" stroke="#4a2818" stroke-width="1.3"/><path d="M647.0 37V28Q650.5 21 654.0 28V37Z" fill="#c89078" stroke="#4a2818" stroke-width="1.3"/><path d="M656.5 37V28Q660.0 21 663.5 28V37Z" fill="#e0ae96" stroke="#4a2818" stroke-width="1.3"/><path d="M666.0 37V28Q669.5 21 673.0 28V37Z" fill="#e0ae96" stroke="#4a2818" stroke-width="1.3"/><path d="M675.5 37V28Q679.0 21 682.5 28V37Z" fill="#c89078" stroke="#4a2818" stroke-width="1.3"/><path d="M685.0 37V28Q688.5 21 692.0 28V37Z" fill="#e0ae96" stroke="#4a2818" stroke-width="1.3"/><path d="M694.5 37V28Q698.0 21 701.5 28V37Z" fill="#e0ae96" stroke="#4a2818" stroke-width="1.3"/><path d="M704.0 37V28Q707.5 21 711.0 28V37Z" fill="#c89078" stroke="#4a2818" stroke-width="1.3"/><path d="M713.5 37V28Q717.0 21 720.5 28V37Z" fill="#e0ae96" stroke="#4a2818" stroke-width="1.3"/><path d="M723.0 37V28Q726.5 21 730.0 28V37Z" fill="#e0ae96" stroke="#4a2818" stroke-width="1.3"/><rect x="20" y="35" width="710" height="9" fill="#4a2c20" opacity="0.8"/><rect x="24.0" y="37" width="6" height="5" fill="#d8a890" opacity="0.6"/><rect x="41.6" y="37" width="6" height="5" fill="#d8a890" opacity="0.6"/><rect x="59.2" y="37" width="6" height="5" fill="#d8a890" opacity="0.6"/><rect x="76.8" y="37" width="6" height="5" fill="#d8a890" opacity="0.6"/><rect x="94.4" y="37" width="6" height="5" fill="#d8a890" opacity="0.6"/><rect x="112.0" y="37" width="6" height="5" fill="#d8a890" opacity="0.6"/><rect x="129.6" y="37" width="6" height="5" fill="#d8a890" opacity="0.6"/><rect x="147.2" y="37" width="6" height="5" fill="#d8a890" opacity="0.6"/><rect x="164.8" y="37" width="6" height="5" fill="#d8a890" opacity="0.6"/><rect x="182.4" y="37" width="6" height="5" fill="#d8a890" opacity="0.6"/><rect x="200.0" y="37" width="6" height="5" fill="#d8a890" opacity="0.6"/><rect x="217.6" y="37" width="6" height="5" fill="#d8a890" opacity="0.6"/><rect x="235.2" y="37" width="6" height="5" fill="#d8a890" opacity="0.6"/><rect x="252.8" y="37" width="6" height="5" fill="#d8a890" opacity="0.6"/><rect x="270.4" y="37" width="6" height="5" fill="#d8a890" opacity="0.6"/><rect x="288.0" y="37" width="6" height="5" fill="#d8a890" opacity="0.6"/><rect x="305.6" y="37" width="6" height="5" fill="#d8a890" opacity="0.6"/><rect x="323.2" y="37" width="6" height="5" fill="#d8a890" opacity="0.6"/><rect x="340.8" y="37" width="6" height="5" fill="#d8a890" opacity="0.6"/><rect x="358.4" y="37" width="6" height="5" fill="#d8a890" opacity="0.6"/><rect x="376.0" y="37" width="6" height="5" fill="#d8a890" opacity="0.6"/><rect x="393.6" y="37" width="6" height="5" fill="#d8a890" opacity="0.6"/><rect x="411.2" y="37" width="6" height="5" fill="#d8a890" opacity="0.6"/><rect x="428.8" y="37" width="6" height="5" fill="#d8a890" opacity="0.6"/><rect x="446.4" y="37" width="6" height="5" fill="#d8a890" opacity="0.6"/><rect x="464.0" y="37" width="6" height="5" fill="#d8a890" opacity="0.6"/><rect x="481.6" y="37" width="6" height="5" fill="#d8a890" opacity="0.6"/><rect x="499.2" y="37" width="6" height="5" fill="#d8a890" opacity="0.6"/><rect x="516.8" y="37" width="6" height="5" fill="#d8a890" opacity="0.6"/><rect x="534.4" y="37" width="6" height="5" fill="#d8a890" opacity="0.6"/><rect x="552.0" y="37" width="6" height="5" fill="#d8a890" opacity="0.6"/><rect x="569.6" y="37" width="6" height="5" fill="#d8a890" opacity="0.6"/><rect x="587.2" y="37" width="6" height="5" fill="#d8a890" opacity="0.6"/><rect x="604.8" y="37" width="6" height="5" fill="#d8a890" opacity="0.6"/><rect x="622.4" y="37" width="6" height="5" fill="#d8a890" opacity="0.6"/><rect x="640.0" y="37" width="6" height="5" fill="#d8a890" opacity="0.6"/><rect x="657.6" y="37" width="6" height="5" fill="#d8a890" opacity="0.6"/><rect x="675.2" y="37" width="6" height="5" fill="#d8a890" opacity="0.6"/><rect x="692.8" y="37" width="6" height="5" fill="#d8a890" opacity="0.6"/><rect x="710.4" y="37" width="6" height="5" fill="#d8a890" opacity="0.6"/><rect x="28" y="44" width="702" height="14" fill="#c9a08e"/><path d="M28 58H730" stroke="#7a5040" stroke-width="1"/><rect x="31.0" y="42" width="7" height="16" fill="#6a3020"/><rect x="62.7" y="42" width="7" height="16" fill="#6a3020"/><rect x="94.4" y="42" width="7" height="16" fill="#6a3020"/><rect x="126.1" y="42" width="7" height="16" fill="#6a3020"/><rect x="157.8" y="42" width="7" height="16" fill="#6a3020"/><rect x="189.5" y="42" width="7" height="16" fill="#6a3020"/><rect x="221.2" y="42" width="7" height="16" fill="#6a3020"/><rect x="252.9" y="42" width="7" height="16" fill="#6a3020"/><rect x="284.6" y="42" width="7" height="16" fill="#6a3020"/><rect x="316.3" y="42" width="7" height="16" fill="#6a3020"/><rect x="348.0" y="42" width="7" height="16" fill="#6a3020"/><rect x="379.7" y="42" width="7" height="16" fill="#6a3020"/><rect x="411.4" y="42" width="7" height="16" fill="#6a3020"/><rect x="443.1" y="42" width="7" height="16" fill="#6a3020"/><rect x="474.8" y="42" width="7" height="16" fill="#6a3020"/><rect x="506.5" y="42" width="7" height="16" fill="#6a3020"/><rect x="538.2" y="42" width="7" height="16" fill="#6a3020"/><rect x="569.9" y="42" width="7" height="16" fill="#6a3020"/><rect x="601.6" y="42" width="7" height="16" fill="#6a3020"/><rect x="633.3" y="42" width="7" height="16" fill="#6a3020"/><rect x="665.0" y="42" width="7" height="16" fill="#6a3020"/><rect x="696.7" y="42" width="7" height="16" fill="#6a3020"/><rect x="728.4" y="42" width="7" height="16" fill="#6a3020"/><rect x="87" y="57" width="76" height="108" fill="#ead2c4" stroke="#5a3a30" stroke-width="1.2"/><rect x="95" y="65" width="59" height="90" fill="#cfcade" stroke="#4a2c22" stroke-width="2.6"/><path d="M124.5 65V155" stroke="#4a3a40" stroke-width="2.2"/><path d="M95 87.5H154" stroke="#4a3a40" stroke-width="1"/><path d="M95 110.0H154" stroke="#4a3a40" stroke-width="2"/><path d="M95 132.5H154" stroke="#4a3a40" stroke-width="1"/><rect x="307" y="57" width="81" height="108" fill="#ead2c4" stroke="#5a3a30" stroke-width="1.2"/><rect x="316" y="65" width="60" height="90" fill="#cfcade" stroke="#4a2c22" stroke-width="2.6"/><path d="M346.0 65V155" stroke="#4a3a40" stroke-width="2.2"/><path d="M316 87.5H376" stroke="#4a3a40" stroke-width="1"/><path d="M316 110.0H376" stroke="#4a3a40" stroke-width="2"/><path d="M316 132.5H376" stroke="#4a3a40" stroke-width="1"/><rect x="563" y="58" width="71" height="123" fill="#ead2c4" stroke="#5a3a30" stroke-width="1.2"/><rect x="573" y="66" width="52" height="108" fill="#aeacc4" stroke="#4a2c22" stroke-width="2.6"/><rect x="205" y="287" width="107" height="200" fill="#ead2c4" stroke="#5a3a30" stroke-width="1.2"/><rect x="215" y="298" width="87" height="160" fill="#cfcade" stroke="#4a2c22" stroke-width="2.6"/><path d="M236.8 298V458" stroke="#4a3a40" stroke-width="1"/><path d="M258.5 298V458" stroke="#4a3a40" stroke-width="2.2"/><path d="M280.2 298V458" stroke="#4a3a40" stroke-width="1"/><path d="M215 330.0H302" stroke="#4a3a40" stroke-width="1"/><path d="M215 362.0H302" stroke="#4a3a40" stroke-width="1"/><path d="M215 394.0H302" stroke="#4a3a40" stroke-width="1"/><path d="M215 426.0H302" stroke="#4a3a40" stroke-width="1"/><rect x="220" y="456" width="80" height="30" fill="#8e4a30"/><rect x="545" y="286" width="108" height="200" fill="#ead2c4" stroke="#5a3a30" stroke-width="1.2"/><rect x="556" y="298" width="87" height="160" fill="#cfcade" stroke="#4a2c22" stroke-width="2.6"/><path d="M577.8 298V458" stroke="#4a3a40" stroke-width="1"/><path d="M599.5 298V458" stroke="#4a3a40" stroke-width="2.2"/><path d="M621.2 298V458" stroke="#4a3a40" stroke-width="1"/><path d="M556 330.0H643" stroke="#4a3a40" stroke-width="1"/><path d="M556 362.0H643" stroke="#4a3a40" stroke-width="1"/><path d="M556 394.0H643" stroke="#4a3a40" stroke-width="1"/><path d="M556 426.0H643" stroke="#4a3a40" stroke-width="1"/><rect x="558" y="456" width="82" height="30" fill="#8e4a30"/><rect x="159" y="436" width="199" height="52" fill="none" stroke="#3a2a28" stroke-width="1.2"/><path d="M166.1 436V488" stroke="#3a2a28" stroke-width="0.8"/><path d="M173.2 436V488" stroke="#3a2a28" stroke-width="0.8"/><path d="M180.3 436V488" stroke="#3a2a28" stroke-width="0.8"/><path d="M187.4 436V488" stroke="#3a2a28" stroke-width="0.8"/><path d="M194.5 436V488" stroke="#3a2a28" stroke-width="0.8"/><path d="M201.6 436V488" stroke="#3a2a28" stroke-width="0.8"/><path d="M208.8 436V488" stroke="#3a2a28" stroke-width="0.8"/><path d="M215.9 436V488" stroke="#3a2a28" stroke-width="0.8"/><path d="M223.0 436V488" stroke="#3a2a28" stroke-width="0.8"/><path d="M230.1 436V488" stroke="#3a2a28" stroke-width="0.8"/><path d="M237.2 436V488" stroke="#3a2a28" stroke-width="0.8"/><path d="M244.3 436V488" stroke="#3a2a28" stroke-width="0.8"/><path d="M251.4 436V488" stroke="#3a2a28" stroke-width="0.8"/><path d="M258.5 436V488" stroke="#3a2a28" stroke-width="0.8"/><path d="M265.6 436V488" stroke="#3a2a28" stroke-width="0.8"/><path d="M272.7 436V488" stroke="#3a2a28" stroke-width="0.8"/><path d="M279.8 436V488" stroke="#3a2a28" stroke-width="0.8"/><path d="M286.9 436V488" stroke="#3a2a28" stroke-width="0.8"/><path d="M294.0 436V488" stroke="#3a2a28" stroke-width="0.8"/><path d="M301.1 436V488" stroke="#3a2a28" stroke-width="0.8"/><path d="M308.2 436V488" stroke="#3a2a28" stroke-width="0.8"/><path d="M315.4 436V488" stroke="#3a2a28" stroke-width="0.8"/><path d="M322.5 436V488" stroke="#3a2a28" stroke-width="0.8"/><path d="M329.6 436V488" stroke="#3a2a28" stroke-width="0.8"/><path d="M336.7 436V488" stroke="#3a2a28" stroke-width="0.8"/><path d="M343.8 436V488" stroke="#3a2a28" stroke-width="0.8"/><path d="M350.9 436V488" stroke="#3a2a28" stroke-width="0.8"/><rect x="502" y="434" width="197" height="52" fill="none" stroke="#3a2a28" stroke-width="1.2"/><path d="M509.0 434V486" stroke="#3a2a28" stroke-width="0.8"/><path d="M516.1 434V486" stroke="#3a2a28" stroke-width="0.8"/><path d="M523.1 434V486" stroke="#3a2a28" stroke-width="0.8"/><path d="M530.1 434V486" stroke="#3a2a28" stroke-width="0.8"/><path d="M537.2 434V486" stroke="#3a2a28" stroke-width="0.8"/><path d="M544.2 434V486" stroke="#3a2a28" stroke-width="0.8"/><path d="M551.2 434V486" stroke="#3a2a28" stroke-width="0.8"/><path d="M558.3 434V486" stroke="#3a2a28" stroke-width="0.8"/><path d="M565.3 434V486" stroke="#3a2a28" stroke-width="0.8"/><path d="M572.4 434V486" stroke="#3a2a28" stroke-width="0.8"/><path d="M579.4 434V486" stroke="#3a2a28" stroke-width="0.8"/><path d="M586.4 434V486" stroke="#3a2a28" stroke-width="0.8"/><path d="M593.5 434V486" stroke="#3a2a28" stroke-width="0.8"/><path d="M600.5 434V486" stroke="#3a2a28" stroke-width="0.8"/><path d="M607.5 434V486" stroke="#3a2a28" stroke-width="0.8"/><path d="M614.6 434V486" stroke="#3a2a28" stroke-width="0.8"/><path d="M621.6 434V486" stroke="#3a2a28" stroke-width="0.8"/><path d="M628.6 434V486" stroke="#3a2a28" stroke-width="0.8"/><path d="M635.7 434V486" stroke="#3a2a28" stroke-width="0.8"/><path d="M642.7 434V486" stroke="#3a2a28" stroke-width="0.8"/><path d="M649.8 434V486" stroke="#3a2a28" stroke-width="0.8"/><path d="M656.8 434V486" stroke="#3a2a28" stroke-width="0.8"/><path d="M663.8 434V486" stroke="#3a2a28" stroke-width="0.8"/><path d="M670.9 434V486" stroke="#3a2a28" stroke-width="0.8"/><path d="M677.9 434V486" stroke="#3a2a28" stroke-width="0.8"/><path d="M684.9 434V486" stroke="#3a2a28" stroke-width="0.8"/><path d="M692.0 434V486" stroke="#3a2a28" stroke-width="0.8"/><path d="M515 488H694L688 500L660 506H530L518 500Z" fill="#efe0d8" stroke="#6a4a40" stroke-width="1"/><rect x="562" y="506" width="78" height="82" fill="#c4c0d4" stroke="#4a3028" stroke-width="1.5"/><path d="M569.8 506V588" stroke="#5a4a50" stroke-width="0.7"/><path d="M577.6 506V588" stroke="#5a4a50" stroke-width="0.7"/><path d="M585.4 506V588" stroke="#5a4a50" stroke-width="0.7"/><path d="M593.2 506V588" stroke="#5a4a50" stroke-width="0.7"/><path d="M601.0 506V588" stroke="#5a4a50" stroke-width="0.7"/><path d="M608.8 506V588" stroke="#5a4a50" stroke-width="0.7"/><path d="M616.6 506V588" stroke="#5a4a50" stroke-width="0.7"/><path d="M624.4 506V588" stroke="#5a4a50" stroke-width="0.7"/><path d="M632.2 506V588" stroke="#5a4a50" stroke-width="0.7"/><path d="M601 506V588" stroke="#4a3028" stroke-width="2"/><rect x="562" y="586" width="78" height="28" fill="#8e4a30"/><rect x="172" y="488" width="175" height="236" fill="#eeddd5" stroke="#6a5a58" stroke-width="1"/><rect x="168" y="487" width="183" height="22" fill="#f2e6de" stroke="#6a5a58" stroke-width="1"/><path d="M168 498H351" stroke="#8a7a78" stroke-width="0.8"/><rect x="184" y="511" width="151" height="213" fill="none" stroke="#6a5a58" stroke-width="1"/><rect x="194" y="522" width="131" height="202" fill="none" stroke="#8a7a78" stroke-width="0.8"/><rect x="204" y="531" width="112" height="184" fill="#9c4a30" stroke="#5a2a18" stroke-width="1.5"/><path d="M260 531V715" stroke="#5a2a18" stroke-width="1.5"/><rect x="45" y="390" width="27" height="27" fill="none" stroke="#5a3a30" stroke-width="1.2"/><rect x="584" y="634" width="37" height="62" fill="#b8b4c8" stroke="#5a4038" stroke-width="1.5"/><path d="M591.4 634V696" stroke="#6a5a60" stroke-width="0.7"/><path d="M598.8 634V696" stroke="#6a5a60" stroke-width="0.7"/><path d="M606.2 634V696" stroke="#6a5a60" stroke-width="0.7"/><path d="M613.6 634V696" stroke="#6a5a60" stroke-width="0.7"/></svg>
</div></body></html>
